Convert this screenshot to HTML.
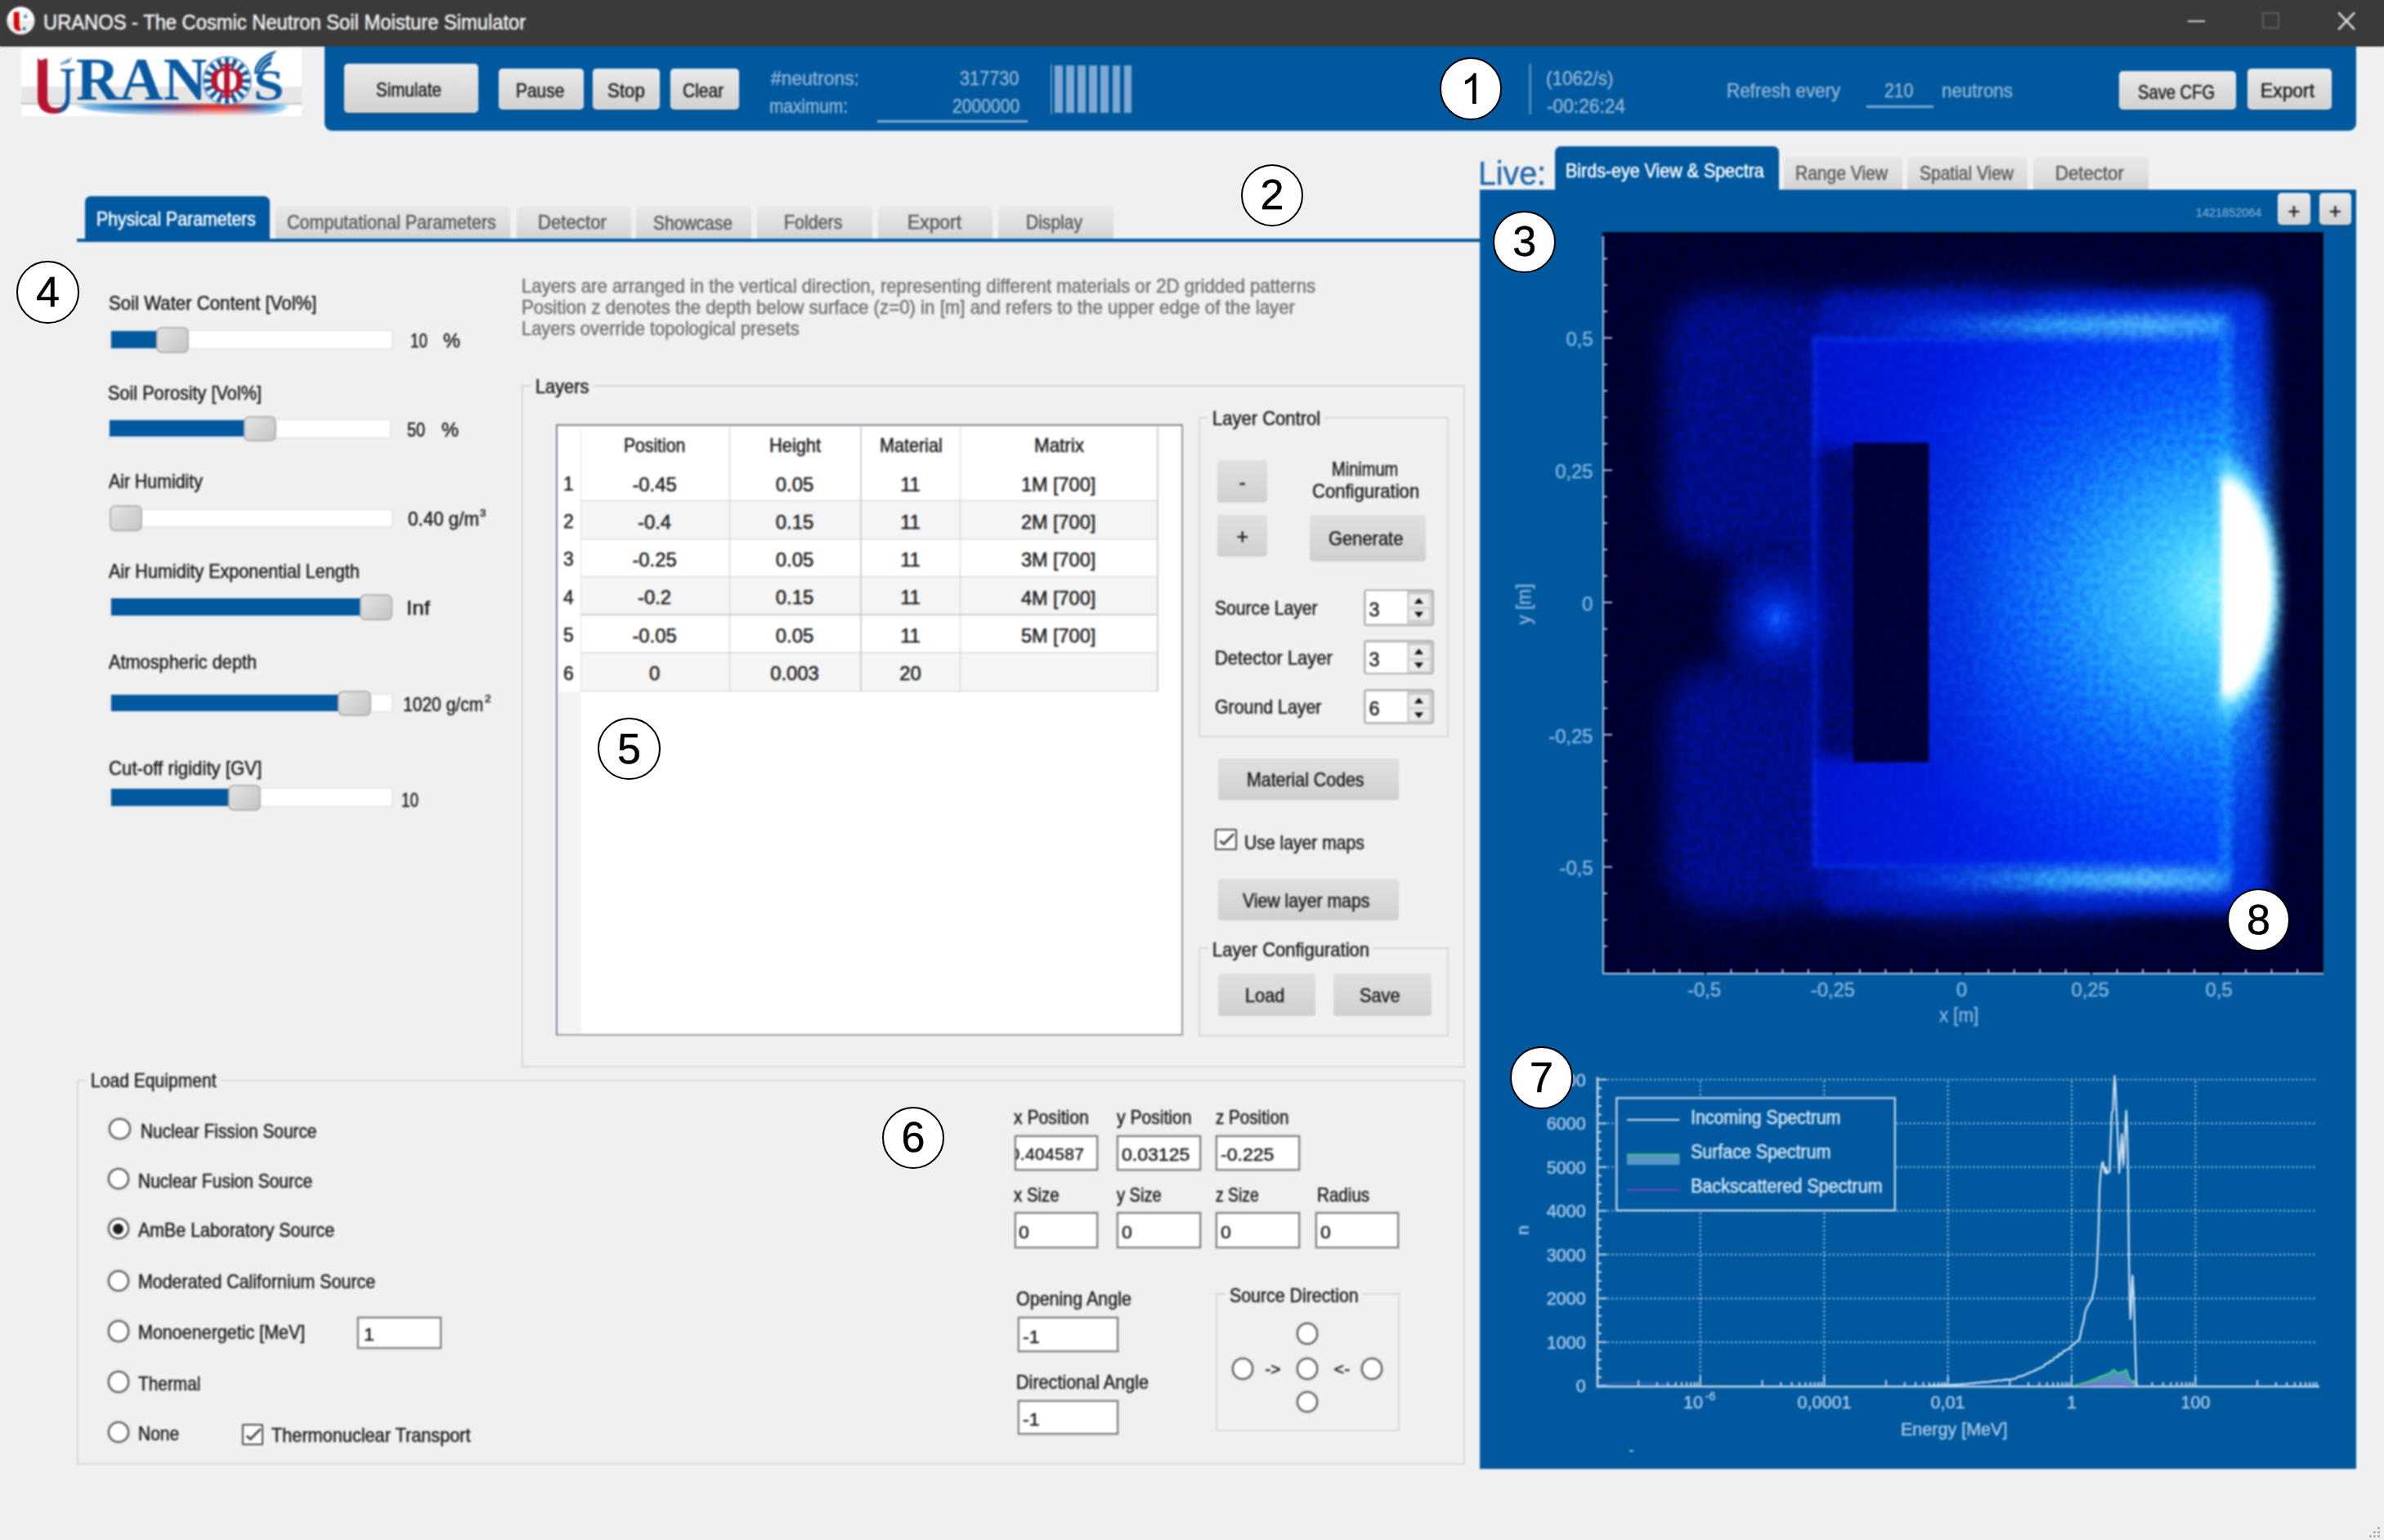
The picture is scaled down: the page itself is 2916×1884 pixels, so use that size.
<!DOCTYPE html>
<html><head><meta charset="utf-8"><title>URANOS - The Cosmic Neutron Soil Moisture Simulator</title>
<style>
html,body{margin:0;padding:0}
html{overflow:hidden;width:2916px;height:1884px}
body{width:2916px;height:1884px;background:#f0f0f0;position:relative;overflow:hidden;font-family:"Liberation Sans",sans-serif;font-size:22px;color:#1c1c1c}
#ui{position:absolute;left:0;top:0;width:2916px;height:1884px;filter:blur(0.9px)}
.a{position:absolute}
.t{position:absolute;white-space:nowrap;-webkit-text-stroke:0.5px currentColor}
svg{position:absolute;overflow:visible}
svg text{font-family:"Liberation Sans",sans-serif}
</style></head><body>
<div class="a" style="left:0;top:0;width:2916px;height:56.4px;background:#3a3a3a"></div>
<div id="ui">
<div class="a " style="left:0.0px;top:0.0px;width:2916.0px;height:56.9px;background:#3a3a3a;"></div>
<svg class="a" style="left:0;top:0" width="60" height="56" viewBox="0 0 60 56">
<defs><linearGradient id="icg" x1="0" x2="0" y1="0" y2="1"><stop offset="0" stop-color="#ffffff"/><stop offset="0.5" stop-color="#fbfbfb"/><stop offset="0.52" stop-color="#e9e9e9"/><stop offset="1" stop-color="#f2f2f2"/></linearGradient></defs>
<circle cx="25.4" cy="25.3" r="17" fill="url(#icg)"/>
<path d="M16.8 14.8 L23.6 14.4 L23.6 31 Q23.6 35 26 36.6 L25 37.6 Q16.8 38.5 16.8 30Z" fill="#d10808"/>
<circle cx="31.2" cy="20.2" r="2.1" fill="#3a7dc0"/><circle cx="32.6" cy="15.8" r="1.1" fill="#8fb8e0"/>
<circle cx="29.7" cy="35.2" r="2.1" fill="#2f74ba"/>
</svg>
<span class="t" style="left:52.5px;top:14.4px;font-size:26.2px;line-height:26.2px;transform-origin:0 50%;transform:scaleX(0.9059);color:#f2f2f2;">URANOS - The Cosmic Neutron Soil Moisture Simulator</span>
<div class="a " style="left:2675.9px;top:24.8px;width:20.8px;height:2.4px;background:#d6d6d6;"></div>
<div class="a " style="left:2766.8px;top:15.0px;width:20.8px;height:20.3px;border:2px solid #5a5a5a;box-sizing:border-box;"></div>
<svg class="a" style="left:2860px;top:14.5px" width="21" height="22"><path d="M0.3 0.3 L20 21.2 M20 0.3 L0.3 21.2" stroke="#e2e2e2" stroke-width="2.5" fill="none"/></svg>
<div class="a " style="left:25.5px;top:58.5px;width:343.0px;height:83.5px;background:#fff;"></div>
<div class="a " style="left:25.5px;top:106.3px;width:343.0px;height:20.0px;background:#e6e6e6;"></div>
<div class="a " style="left:25.5px;top:126.2px;width:343.0px;height:1.4px;background:#c4c4c4;"></div>
<svg class="a" style="left:25px;top:58px" width="344" height="86" viewBox="25 58 344 86">
<defs>
<linearGradient id="ug" x1="0" x2="1" y1="0" y2="0"><stop offset="0" stop-color="#b8142e"/><stop offset="0.45" stop-color="#b8142e"/><stop offset="0.75" stop-color="#0a5aa5"/><stop offset="1" stop-color="#0a5aa5"/></linearGradient>
<linearGradient id="sw" gradientUnits="userSpaceOnUse" x1="87" x2="356" y1="0" y2="0"><stop offset="0" stop-color="#bfe2f8" stop-opacity="0"/><stop offset="0.07" stop-color="#7fc0ee"/><stop offset="0.2" stop-color="#2f86cf"/><stop offset="0.36" stop-color="#1c5ea8"/><stop offset="0.5" stop-color="#7a3c70"/><stop offset="0.6" stop-color="#c83a40"/><stop offset="0.68" stop-color="#e8342c"/><stop offset="0.76" stop-color="#c23c48"/><stop offset="0.84" stop-color="#5a5f9c"/><stop offset="0.91" stop-color="#3c9ad8"/><stop offset="0.97" stop-color="#a8daf6"/><stop offset="1" stop-color="#d8effb" stop-opacity="0"/></linearGradient>
<linearGradient id="swm" x1="0" x2="0" y1="0" y2="1"><stop offset="0" stop-color="#fff"/><stop offset="0.25" stop-color="#fff"/><stop offset="1" stop-color="#000"/></linearGradient>
<mask id="swmask" maskUnits="userSpaceOnUse" x="80" y="126" width="285" height="20"><rect x="80" y="127.4" width="285" height="15.5" fill="url(#swm)"/></mask>
</defs>
<g mask="url(#swmask)"><path d="M87 127 L356 127 Q350 138 325 141.5 Q275 145 215 142.5 Q140 140 105 134 Q93 131 87 127Z" fill="url(#sw)"/></g>
<path d="M46 71 L50 74 L56 71.5 L58 72 L58 120 Q58 132 68 132 Q80.5 132 80.5 118 L80.5 88 L74 86.5 L74 84.5 L91.5 84.5 L91.5 86.5 L85.6 88 L85.6 119 Q85.6 139 66 139 Q46 139 46 119Z" fill="url(#ug)"/>
<path d="M74 80 l2 -4 l1.5 3 l2 -5 l1.5 4 l2 -6 l1 5 l3 -7" stroke="#0a5aa5" stroke-width="1" fill="none"/>
<text x="93" y="121.5" fill="#0a5aa2" textLength="160" lengthAdjust="spacingAndGlyphs" style="font:bold 73px 'Liberation Serif',serif">RAN</text>
<circle cx="277.6" cy="98.9" r="29.3" fill="#fff" stroke="#2a6fb2" stroke-width="1.2"/>
<path d="M289.5 97.7 L305.8 96.0 L305.8 101.8 L289.5 100.1Z M289.1 102.3 L304.7 107.0 L302.5 112.3 L288.2 104.6Z M286.9 106.5 L299.5 116.8 L295.5 120.8 L285.2 108.2Z M283.3 109.5 L291.0 123.8 L285.7 126.0 L281.0 110.4Z M278.8 110.8 L280.5 127.1 L274.7 127.1 L276.4 110.8Z M274.2 110.4 L269.5 126.0 L264.2 123.8 L271.9 109.5Z M270.0 108.2 L259.7 120.8 L255.7 116.8 L268.3 106.5Z M267.0 104.6 L252.7 112.3 L250.5 107.0 L266.1 102.3Z M265.7 100.1 L249.4 101.8 L249.4 96.0 L265.7 97.7Z M266.1 95.5 L250.5 90.8 L252.7 85.5 L267.0 93.2Z M268.3 91.3 L255.7 81.0 L259.7 77.0 L270.0 89.6Z M271.9 88.3 L264.2 74.0 L269.5 71.8 L274.2 87.4Z M276.4 87.0 L274.7 70.7 L280.5 70.7 L278.8 87.0Z M281.0 87.4 L285.7 71.8 L291.0 74.0 L283.3 88.3Z M285.2 89.6 L295.5 77.0 L299.5 81.0 L286.9 91.3Z M288.2 93.2 L302.5 85.5 L304.7 90.8 L289.1 95.5Z" fill="#0a5aa2"/>
<ellipse cx="277.6" cy="99.5" rx="17" ry="13" fill="#fff"/>
<g transform="translate(277.6 0) scale(0.83 1)"><text x="0" y="119.8" text-anchor="middle" fill="#b9142e" style="font:bold 62.5px 'Liberation Serif',serif">&#934;</text></g>
<g transform="translate(310 0) scale(1.3 1)"><text x="0" y="122.3" fill="#0a5aa2" style="font:bold 52px 'Liberation Serif',serif">S</text></g>
<path d="M310.8 90.5 Q311.5 69 339 61.5 Q330.5 69.5 331.5 79.5 Q324 81.5 321 90Z" fill="#0a5aa2"/>
<path d="M314.5 87 Q317 72.5 335 66.5 M318 88 Q321 77.5 333.5 72.5" stroke="#fff" stroke-width="1.1" fill="none"/>
</svg>
<div class="a " style="left:397.0px;top:56.5px;width:2485.3px;height:103.5px;background:#00599f;border-radius:0 0 9px 9px;"></div>
<div class="a " style="left:421.0px;top:78.0px;width:164.0px;height:60.0px;background:linear-gradient(#ebebeb,#dedede 45%,#d2d2d2);border-radius:5px;box-shadow:inset 0 0 0 1px rgba(255,255,255,.55),0 1px 2px rgba(0,0,0,.35);"></div>
<span class="t" style="left:460.4px;top:98.9px;font-size:23.4px;line-height:23.4px;transform-origin:0 50%;transform:scaleX(0.8776);color:#1c1c1c;">Simulate</span>
<div class="a " style="left:610.0px;top:84.0px;width:104.0px;height:50.0px;background:linear-gradient(#ebebeb,#dedede 45%,#d2d2d2);border-radius:5px;box-shadow:inset 0 0 0 1px rgba(255,255,255,.55),0 1px 2px rgba(0,0,0,.35);"></div>
<span class="t" style="left:630.9px;top:99.7px;font-size:23.4px;line-height:23.4px;transform-origin:0 50%;transform:scaleX(0.8952);color:#1c1c1c;">Pause</span>
<div class="a " style="left:725.0px;top:84.0px;width:82.0px;height:50.0px;background:linear-gradient(#ebebeb,#dedede 45%,#d2d2d2);border-radius:5px;box-shadow:inset 0 0 0 1px rgba(255,255,255,.55),0 1px 2px rgba(0,0,0,.35);"></div>
<span class="t" style="left:742.6px;top:99.7px;font-size:23.4px;line-height:23.4px;transform-origin:0 50%;transform:scaleX(0.9535);color:#1c1c1c;">Stop</span>
<div class="a " style="left:820.0px;top:84.0px;width:83.5px;height:50.0px;background:linear-gradient(#ebebeb,#dedede 45%,#d2d2d2);border-radius:5px;box-shadow:inset 0 0 0 1px rgba(255,255,255,.55),0 1px 2px rgba(0,0,0,.35);"></div>
<span class="t" style="left:835.4px;top:99.8px;font-size:23.4px;line-height:23.4px;transform-origin:0 50%;transform:scaleX(0.8995);color:#1c1c1c;">Clear</span>
<span class="t" style="left:943.0px;top:84.8px;font-size:23.4px;line-height:23.4px;transform-origin:0 50%;transform:scaleX(0.9766);color:#8fb3d6;">#neutrons:</span>
<span class="t" style="left:941.0px;top:119.4px;font-size:23.4px;line-height:23.4px;transform-origin:0 50%;transform:scaleX(0.8897);color:#8fb3d6;">maximum:</span>
<span class="t" style="left:1174.0px;top:84.8px;font-size:23.4px;line-height:23.4px;transform-origin:0 50%;transform:scaleX(0.9259);color:#8fb3d6;">317730</span>
<span class="t" style="left:1165.0px;top:119.4px;font-size:23.4px;line-height:23.4px;transform-origin:0 50%;transform:scaleX(0.9034);color:#8fb3d6;">2000000</span>
<div class="a " style="left:1073.0px;top:146.7px;width:183.5px;height:3.0px;background:#7fa9d2;"></div>
<div class="a " style="left:1285.0px;top:78.5px;width:2.0px;height:61.5px;background:#5f95c6;"></div>
<div class="a " style="left:1290.0px;top:80.0px;width:9.6px;height:58.0px;background:#7ea8d1;"></div>
<div class="a " style="left:1304.1px;top:80.0px;width:9.6px;height:58.0px;background:#7ea8d1;"></div>
<div class="a " style="left:1318.2px;top:80.0px;width:9.6px;height:58.0px;background:#7ea8d1;"></div>
<div class="a " style="left:1332.3px;top:80.0px;width:9.6px;height:58.0px;background:#7ea8d1;"></div>
<div class="a " style="left:1346.4px;top:80.0px;width:9.6px;height:58.0px;background:#7ea8d1;"></div>
<div class="a " style="left:1360.5px;top:80.0px;width:9.6px;height:58.0px;background:#7ea8d1;"></div>
<div class="a " style="left:1374.6px;top:80.0px;width:9.6px;height:58.0px;background:#7ea8d1;"></div>
<div class="a " style="left:1870.0px;top:78.0px;width:3.0px;height:62.0px;background:#4f89bf;"></div>
<span class="t" style="left:1890.5px;top:84.8px;font-size:23.4px;line-height:23.4px;transform-origin:0 50%;transform:scaleX(0.9610);color:#8fb3d6;">(1062/s)</span>
<span class="t" style="left:1892.0px;top:118.8px;font-size:23.4px;line-height:23.4px;transform-origin:0 50%;transform:scaleX(0.9709);color:#8fb3d6;">-00:26:24</span>
<span class="t" style="left:2111.8px;top:99.7px;font-size:23.4px;line-height:23.4px;transform-origin:0 50%;transform:scaleX(0.9557);color:#8fb3d6;">Refresh every</span>
<span class="t" style="left:2305.0px;top:99.7px;font-size:23.4px;line-height:23.4px;transform-origin:0 50%;transform:scaleX(0.9067);color:#8fb3d6;">210</span>
<div class="a " style="left:2282.5px;top:129.0px;width:82.5px;height:3.0px;background:#7fa9d2;"></div>
<span class="t" style="left:2374.6px;top:99.7px;font-size:23.4px;line-height:23.4px;transform-origin:0 50%;transform:scaleX(0.9543);color:#8fb3d6;">neutrons</span>
<div class="a " style="left:2592.0px;top:86.5px;width:142.5px;height:47.1px;background:linear-gradient(#ebebeb,#dedede 45%,#d2d2d2);border-radius:5px;box-shadow:inset 0 0 0 1px rgba(255,255,255,.55),0 1px 2px rgba(0,0,0,.35);"></div>
<span class="t" style="left:2614.8px;top:101.5px;font-size:23.4px;line-height:23.4px;transform-origin:0 50%;transform:scaleX(0.8624);color:#1c1c1c;">Save CFG</span>
<div class="a " style="left:2749.0px;top:84.0px;width:102.6px;height:49.6px;background:linear-gradient(#ebebeb,#dedede 45%,#d2d2d2);border-radius:5px;box-shadow:inset 0 0 0 1px rgba(255,255,255,.55),0 1px 2px rgba(0,0,0,.35);"></div>
<span class="t" style="left:2765.0px;top:99.5px;font-size:23.4px;line-height:23.4px;transform-origin:0 50%;transform:scaleX(0.9759);color:#1c1c1c;">Export</span>
<div class="a " style="left:94.0px;top:292.0px;width:1720.0px;height:4.0px;background:#00599f;"></div>
<div class="a " style="left:104.0px;top:240.0px;width:226.0px;height:53.0px;background:#00599f;border-radius:7px 7px 0 0;"></div>
<span class="t" style="left:118.0px;top:257.1px;font-size:23.4px;line-height:23.4px;transform-origin:0 50%;transform:scaleX(0.9087);color:#fff;">Physical Parameters</span>
<div class="a " style="left:337.0px;top:250.5px;width:287.0px;height:41.5px;background:linear-gradient(#e9e9e9,#dedede 60%,#d3d3d3);border-radius:6px 6px 0 0;box-shadow:inset 0 1px 0 #f4f4f4;"></div>
<span class="t" style="left:351.0px;top:261.4px;font-size:23.4px;line-height:23.4px;transform-origin:0 50%;transform:scaleX(0.9197);color:#5a5a5a;">Computational Parameters</span>
<div class="a " style="left:631.5px;top:250.5px;width:140.5px;height:41.5px;background:linear-gradient(#e9e9e9,#dedede 60%,#d3d3d3);border-radius:6px 6px 0 0;box-shadow:inset 0 1px 0 #f4f4f4;"></div>
<span class="t" style="left:657.7px;top:261.4px;font-size:23.4px;line-height:23.4px;transform-origin:0 50%;transform:scaleX(0.9487);color:#5a5a5a;">Detector</span>
<div class="a " style="left:778.0px;top:250.5px;width:141.0px;height:41.5px;background:linear-gradient(#e9e9e9,#dedede 60%,#d3d3d3);border-radius:6px 6px 0 0;box-shadow:inset 0 1px 0 #f4f4f4;"></div>
<span class="t" style="left:799.0px;top:261.6px;font-size:23.4px;line-height:23.4px;transform-origin:0 50%;transform:scaleX(0.8984);color:#5a5a5a;">Showcase</span>
<div class="a " style="left:926.0px;top:250.5px;width:140.5px;height:41.5px;background:linear-gradient(#e9e9e9,#dedede 60%,#d3d3d3);border-radius:6px 6px 0 0;box-shadow:inset 0 1px 0 #f4f4f4;"></div>
<span class="t" style="left:958.5px;top:261.4px;font-size:23.4px;line-height:23.4px;transform-origin:0 50%;transform:scaleX(0.9163);color:#5a5a5a;">Folders</span>
<div class="a " style="left:1073.5px;top:250.5px;width:140.5px;height:41.5px;background:linear-gradient(#e9e9e9,#dedede 60%,#d3d3d3);border-radius:6px 6px 0 0;box-shadow:inset 0 1px 0 #f4f4f4;"></div>
<span class="t" style="left:1110.0px;top:261.4px;font-size:23.4px;line-height:23.4px;transform-origin:0 50%;transform:scaleX(0.9759);color:#5a5a5a;">Export</span>
<div class="a " style="left:1220.5px;top:250.5px;width:141.0px;height:41.5px;background:linear-gradient(#e9e9e9,#dedede 60%,#d3d3d3);border-radius:6px 6px 0 0;box-shadow:inset 0 1px 0 #f4f4f4;"></div>
<span class="t" style="left:1255.0px;top:261.4px;font-size:23.4px;line-height:23.4px;transform-origin:0 50%;transform:scaleX(0.8993);color:#5a5a5a;">Display</span>
<span class="t" style="left:133.4px;top:360.2px;font-size:23.4px;line-height:23.4px;transform-origin:0 50%;transform:scaleX(0.9487);color:#1c1c1c;">Soil Water Content [Vol%]</span>
<div class="a " style="left:135.6px;top:405.3px;width:343.6px;height:20.5px;background:#fff;box-shadow:0 0 0 1.5px #e4e4e4;"></div>
<div class="a " style="left:136.0px;top:404.9px;width:59.4px;height:20.9px;background:#00599f;"></div>
<div class="a " style="left:191.0px;top:400.0px;width:40.0px;height:31.5px;background:linear-gradient(135deg,#e4e4e4,#d4d4d4 50%,#c6c6c6);border:2px solid #b3b3b3;border-radius:7px;box-sizing:border-box;"></div>
<span class="t" style="left:501.5px;top:405.6px;font-size:23.4px;line-height:23.4px;transform-origin:0 50%;transform:scaleX(0.7991);color:#1c1c1c;">10</span>
<span class="t" style="left:542.0px;top:405.6px;font-size:23.4px;line-height:23.4px;transform-origin:0 50%;transform:scaleX(1.0093);color:#1c1c1c;">%</span>
<span class="t" style="left:131.5px;top:469.7px;font-size:23.4px;line-height:23.4px;transform-origin:0 50%;transform:scaleX(0.9266);color:#1c1c1c;">Soil Porosity [Vol%]</span>
<div class="a " style="left:133.7px;top:514.0px;width:343.6px;height:20.5px;background:#fff;box-shadow:0 0 0 1.5px #e4e4e4;"></div>
<div class="a " style="left:134.1px;top:513.6px;width:168.3px;height:20.9px;background:#00599f;"></div>
<div class="a " style="left:298.0px;top:508.6px;width:39.7px;height:31.7px;background:linear-gradient(135deg,#e4e4e4,#d4d4d4 50%,#c6c6c6);border:2px solid #b3b3b3;border-radius:7px;box-sizing:border-box;"></div>
<span class="t" style="left:498.0px;top:514.6px;font-size:23.4px;line-height:23.4px;transform-origin:0 50%;transform:scaleX(0.8452);color:#1c1c1c;">50</span>
<span class="t" style="left:540.0px;top:514.6px;font-size:23.4px;line-height:23.4px;transform-origin:0 50%;transform:scaleX(1.0093);color:#1c1c1c;">%</span>
<span class="t" style="left:133.4px;top:578.4px;font-size:23.4px;line-height:23.4px;transform-origin:0 50%;transform:scaleX(0.9110);color:#1c1c1c;">Air Humidity</span>
<div class="a " style="left:135.6px;top:623.6px;width:343.6px;height:20.5px;background:#fff;box-shadow:0 0 0 1.5px #e4e4e4;"></div>
<div class="a " style="left:134.0px;top:618.0px;width:40.0px;height:32.0px;background:linear-gradient(135deg,#e4e4e4,#d4d4d4 50%,#c6c6c6);border:2px solid #b3b3b3;border-radius:7px;box-sizing:border-box;"></div>
<span class="t" style="left:499.3px;top:623.9px;font-size:23.4px;line-height:23.4px;transform-origin:0 50%;transform:scaleX(0.9577);color:#1c1c1c;">0.40 g/m</span>
<span class="t" style="left:587.2px;top:622.3px;font-size:12.5px;line-height:12.5px;transform-origin:0 50%;transform:scaleX(1.0644);color:#1c1c1c;">3</span>
<span class="t" style="left:133.4px;top:688.0px;font-size:23.4px;line-height:23.4px;transform-origin:0 50%;transform:scaleX(0.9216);color:#1c1c1c;">Air Humidity Exponential Length</span>
<div class="a " style="left:135.6px;top:732.6px;width:343.6px;height:20.5px;background:#fff;box-shadow:0 0 0 1.5px #e4e4e4;"></div>
<div class="a " style="left:136.0px;top:732.2px;width:307.9px;height:20.9px;background:#00599f;"></div>
<div class="a " style="left:439.5px;top:727.0px;width:40.2px;height:31.8px;background:linear-gradient(135deg,#e4e4e4,#d4d4d4 50%,#c6c6c6);border:2px solid #b3b3b3;border-radius:7px;box-sizing:border-box;"></div>
<span class="t" style="left:497.0px;top:732.7px;font-size:23.4px;line-height:23.4px;transform-origin:0 50%;transform:scaleX(1.1146);color:#1c1c1c;">Inf</span>
<span class="t" style="left:133.4px;top:799.4px;font-size:23.4px;line-height:23.4px;transform-origin:0 50%;transform:scaleX(0.9287);color:#1c1c1c;">Atmospheric depth</span>
<div class="a " style="left:135.6px;top:849.9px;width:343.6px;height:20.5px;background:#fff;box-shadow:0 0 0 1.5px #e4e4e4;"></div>
<div class="a " style="left:136.0px;top:849.5px;width:281.8px;height:20.9px;background:#00599f;"></div>
<div class="a " style="left:413.4px;top:844.7px;width:40.3px;height:31.3px;background:linear-gradient(135deg,#e4e4e4,#d4d4d4 50%,#c6c6c6);border:2px solid #b3b3b3;border-radius:7px;box-sizing:border-box;"></div>
<span class="t" style="left:493.4px;top:850.8px;font-size:23.4px;line-height:23.4px;transform-origin:0 50%;transform:scaleX(0.8996);color:#1c1c1c;">1020 g/cm</span>
<span class="t" style="left:592.5px;top:849.2px;font-size:12.5px;line-height:12.5px;transform-origin:0 50%;transform:scaleX(1.0788);color:#1c1c1c;">2</span>
<span class="t" style="left:133.4px;top:928.8px;font-size:23.4px;line-height:23.4px;transform-origin:0 50%;transform:scaleX(0.9501);color:#1c1c1c;">Cut-off rigidity [GV]</span>
<div class="a " style="left:135.6px;top:965.3px;width:343.6px;height:20.8px;background:#fff;box-shadow:0 0 0 1.5px #e4e4e4;"></div>
<div class="a " style="left:136.0px;top:964.9px;width:147.6px;height:21.2px;background:#00599f;"></div>
<div class="a " style="left:279.2px;top:960.0px;width:40.3px;height:31.5px;background:linear-gradient(135deg,#e4e4e4,#d4d4d4 50%,#c6c6c6);border:2px solid #b3b3b3;border-radius:7px;box-sizing:border-box;"></div>
<span class="t" style="left:491.3px;top:967.8px;font-size:23.4px;line-height:23.4px;transform-origin:0 50%;transform:scaleX(0.8030);color:#1c1c1c;">10</span>
<span class="t" style="left:637.6px;top:338.7px;font-size:23.4px;line-height:23.4px;transform-origin:0 50%;transform:scaleX(0.9482);color:#747474;">Layers are arranged in the vertical direction, representing different materials or 2D gridded patterns</span>
<span class="t" style="left:637.6px;top:364.7px;font-size:23.4px;line-height:23.4px;transform-origin:0 50%;transform:scaleX(0.9516);color:#747474;">Position z denotes the depth below surface (z=0) in [m] and refers to the upper edge of the layer</span>
<span class="t" style="left:637.6px;top:391.1px;font-size:23.4px;line-height:23.4px;transform-origin:0 50%;transform:scaleX(0.9363);color:#747474;">Layers override topological presets</span>
<div class="a " style="left:638.3px;top:470.7px;width:1154.0px;height:835.8px;border:2px solid #d9d9d9;box-sizing:border-box;"></div>
<div class="a " style="left:650.4px;top:468.7px;width:75.3px;height:7.0px;background:#f0f0f0;"></div>
<span class="t" style="left:655.4px;top:461.9px;font-size:23.4px;line-height:23.4px;transform-origin:0 50%;transform:scaleX(0.9297);color:#1c1c1c;">Layers</span>
<div class="a " style="left:680.4px;top:519.2px;width:767.1px;height:747.8px;background:#fff;border:2.6px solid #7d828b;border-right-color:#979ba3;border-bottom-color:#979ba3;box-sizing:border-box;"></div>
<div class="a " style="left:682.9px;top:845.6px;width:27.8px;height:418.9px;background:#f3f3f3;"></div>
<div class="a " style="left:710.7px;top:612.2px;width:705.5px;height:1.7px;background:#cdcdcd;"></div>
<div class="a " style="left:710.7px;top:613.2px;width:705.5px;height:46.4px;background:#f5f5f5;"></div>
<div class="a " style="left:710.7px;top:658.6px;width:705.5px;height:1.7px;background:#cdcdcd;"></div>
<div class="a " style="left:710.7px;top:705.0px;width:705.5px;height:1.7px;background:#cdcdcd;"></div>
<div class="a " style="left:710.7px;top:706.0px;width:705.5px;height:46.4px;background:#f5f5f5;"></div>
<div class="a " style="left:710.7px;top:751.4px;width:705.5px;height:1.7px;background:#cdcdcd;"></div>
<div class="a " style="left:710.7px;top:797.8px;width:705.5px;height:1.7px;background:#cdcdcd;"></div>
<div class="a " style="left:710.7px;top:798.8px;width:705.5px;height:46.8px;background:#f5f5f5;"></div>
<div class="a " style="left:710.7px;top:844.6px;width:705.5px;height:1.7px;background:#cdcdcd;"></div>
<div class="a " style="left:709.9px;top:521.7px;width:1.6px;height:323.9px;background:#e2e2e2;"></div>
<div class="a " style="left:891.7px;top:521.7px;width:1.6px;height:323.9px;background:#d0d0d0;"></div>
<div class="a " style="left:1052.0px;top:521.7px;width:1.6px;height:323.9px;background:#d0d0d0;"></div>
<div class="a " style="left:1173.6px;top:521.7px;width:1.6px;height:323.9px;background:#d0d0d0;"></div>
<div class="a " style="left:1415.4px;top:521.7px;width:1.6px;height:323.9px;background:#d0d0d0;"></div>
<span class="t" style="left:762.8px;top:534.1px;font-size:23.4px;line-height:23.4px;transform-origin:0 50%;transform:scaleX(0.9033);color:#1c1c1c;">Position</span>
<span class="t" style="left:940.8px;top:534.1px;font-size:23.4px;line-height:23.4px;transform-origin:0 50%;transform:scaleX(0.9328);color:#1c1c1c;">Height</span>
<span class="t" style="left:1075.6px;top:534.1px;font-size:23.4px;line-height:23.4px;transform-origin:0 50%;transform:scaleX(0.9216);color:#1c1c1c;">Material</span>
<span class="t" style="left:1265.4px;top:534.1px;font-size:23.4px;line-height:23.4px;transform-origin:0 50%;transform:scaleX(0.9560);color:#1c1c1c;">Matrix</span>
<span class="t" style="left:695.3px;top:581.1px;font-size:23px;line-height:23px;color:#1c1c1c;transform:translateX(-50%);">1</span>
<span class="t" style="left:800.5px;top:580.7px;font-size:23.8px;line-height:23.8px;color:#1c1c1c;transform:translateX(-50%);">-0.45</span>
<span class="t" style="left:972.0px;top:580.7px;font-size:23.8px;line-height:23.8px;color:#1c1c1c;transform:translateX(-50%);">0.05</span>
<span class="t" style="left:1113.5px;top:580.7px;font-size:23.8px;line-height:23.8px;color:#1c1c1c;transform:translateX(-50%);">11</span>
<span class="t" style="left:1249.3px;top:581.1px;font-size:24px;line-height:24px;transform-origin:0 50%;transform:scaleX(0.9765);color:#1c1c1c;">1M [700]</span>
<span class="t" style="left:695.3px;top:626.9px;font-size:23px;line-height:23px;color:#1c1c1c;transform:translateX(-50%);">2</span>
<span class="t" style="left:800.5px;top:626.5px;font-size:23.8px;line-height:23.8px;color:#1c1c1c;transform:translateX(-50%);">-0.4</span>
<span class="t" style="left:972.0px;top:626.5px;font-size:23.8px;line-height:23.8px;color:#1c1c1c;transform:translateX(-50%);">0.15</span>
<span class="t" style="left:1113.5px;top:626.5px;font-size:23.8px;line-height:23.8px;color:#1c1c1c;transform:translateX(-50%);">11</span>
<span class="t" style="left:1249.3px;top:626.9px;font-size:24px;line-height:24px;transform-origin:0 50%;transform:scaleX(0.9765);color:#1c1c1c;">2M [700]</span>
<span class="t" style="left:695.3px;top:673.3px;font-size:23px;line-height:23px;color:#1c1c1c;transform:translateX(-50%);">3</span>
<span class="t" style="left:800.5px;top:672.9px;font-size:23.8px;line-height:23.8px;color:#1c1c1c;transform:translateX(-50%);">-0.25</span>
<span class="t" style="left:972.0px;top:672.9px;font-size:23.8px;line-height:23.8px;color:#1c1c1c;transform:translateX(-50%);">0.05</span>
<span class="t" style="left:1113.5px;top:672.9px;font-size:23.8px;line-height:23.8px;color:#1c1c1c;transform:translateX(-50%);">11</span>
<span class="t" style="left:1249.3px;top:673.3px;font-size:24px;line-height:24px;transform-origin:0 50%;transform:scaleX(0.9765);color:#1c1c1c;">3M [700]</span>
<span class="t" style="left:695.3px;top:719.7px;font-size:23px;line-height:23px;color:#1c1c1c;transform:translateX(-50%);">4</span>
<span class="t" style="left:800.5px;top:719.3px;font-size:23.8px;line-height:23.8px;color:#1c1c1c;transform:translateX(-50%);">-0.2</span>
<span class="t" style="left:972.0px;top:719.3px;font-size:23.8px;line-height:23.8px;color:#1c1c1c;transform:translateX(-50%);">0.15</span>
<span class="t" style="left:1113.5px;top:719.3px;font-size:23.8px;line-height:23.8px;color:#1c1c1c;transform:translateX(-50%);">11</span>
<span class="t" style="left:1249.3px;top:719.7px;font-size:24px;line-height:24px;transform-origin:0 50%;transform:scaleX(0.9765);color:#1c1c1c;">4M [700]</span>
<span class="t" style="left:695.3px;top:766.1px;font-size:23px;line-height:23px;color:#1c1c1c;transform:translateX(-50%);">5</span>
<span class="t" style="left:800.5px;top:765.7px;font-size:23.8px;line-height:23.8px;color:#1c1c1c;transform:translateX(-50%);">-0.05</span>
<span class="t" style="left:972.0px;top:765.7px;font-size:23.8px;line-height:23.8px;color:#1c1c1c;transform:translateX(-50%);">0.05</span>
<span class="t" style="left:1113.5px;top:765.7px;font-size:23.8px;line-height:23.8px;color:#1c1c1c;transform:translateX(-50%);">11</span>
<span class="t" style="left:1249.3px;top:766.1px;font-size:24px;line-height:24px;transform-origin:0 50%;transform:scaleX(0.9765);color:#1c1c1c;">5M [700]</span>
<span class="t" style="left:695.3px;top:812.7px;font-size:23px;line-height:23px;color:#1c1c1c;transform:translateX(-50%);">6</span>
<span class="t" style="left:800.5px;top:812.3px;font-size:23.8px;line-height:23.8px;color:#1c1c1c;transform:translateX(-50%);">0</span>
<span class="t" style="left:972.0px;top:812.3px;font-size:23.8px;line-height:23.8px;color:#1c1c1c;transform:translateX(-50%);">0.003</span>
<span class="t" style="left:1113.5px;top:812.3px;font-size:23.8px;line-height:23.8px;color:#1c1c1c;transform:translateX(-50%);">20</span>
<div class="a " style="left:1466.3px;top:510.0px;width:305.7px;height:392.3px;border:2px solid #d9d9d9;box-sizing:border-box;"></div>
<div class="a " style="left:1477.8px;top:508.0px;width:142.2px;height:7.0px;background:#f0f0f0;"></div>
<span class="t" style="left:1482.8px;top:501.4px;font-size:23.4px;line-height:23.4px;transform-origin:0 50%;transform:scaleX(0.9411);color:#1c1c1c;">Layer Control</span>
<div class="a " style="left:1489.3px;top:562.0px;width:60.7px;height:52.5px;background:linear-gradient(#e0e0e0,#d9d9d9 50%,#cfcfcf);border-radius:4px;box-shadow:inset 0 1px 0 rgba(255,255,255,.5);"></div>
<span class="t" style="left:1515.8px;top:578.7px;font-size:23.4px;line-height:23.4px;transform-origin:0 50%;transform:scaleX(1.0000);color:#1c1c1c;">-</span>
<div class="a " style="left:1489.3px;top:628.5px;width:60.7px;height:52.5px;background:linear-gradient(#e0e0e0,#d9d9d9 50%,#cfcfcf);border-radius:4px;box-shadow:inset 0 1px 0 rgba(255,255,255,.5);"></div>
<span class="t" style="left:1512.4px;top:644.4px;font-size:25px;line-height:25px;transform-origin:0 50%;transform:scaleX(1.0000);color:#1c1c1c;">+</span>
<span class="t" style="left:1628.9px;top:563.2px;font-size:23.4px;line-height:23.4px;transform-origin:0 50%;transform:scaleX(0.8567);color:#1c1c1c;">Minimum</span>
<span class="t" style="left:1605.0px;top:589.9px;font-size:23.4px;line-height:23.4px;transform-origin:0 50%;transform:scaleX(0.9426);color:#1c1c1c;">Configuration</span>
<div class="a " style="left:1602.0px;top:628.5px;width:141.8px;height:58.5px;background:linear-gradient(#e0e0e0,#d9d9d9 50%,#cfcfcf);border-radius:4px;box-shadow:inset 0 1px 0 rgba(255,255,255,.5);"></div>
<span class="t" style="left:1625.0px;top:648.2px;font-size:23.4px;line-height:23.4px;transform-origin:0 50%;transform:scaleX(0.9368);color:#1c1c1c;">Generate</span>
<span class="t" style="left:1486.0px;top:732.9px;font-size:23.4px;line-height:23.4px;transform-origin:0 50%;transform:scaleX(0.9031);color:#1c1c1c;">Source Layer</span>
<div class="a " style="left:1668.0px;top:720.5px;width:86.0px;height:45.1px;background:linear-gradient(#c6c6c6,#d6d6d6 30%,#d0d0d0);border:2.8px solid #b1b1b1;border-radius:4px;box-sizing:border-box;"></div>
<div class="a " style="left:1670.8px;top:723.3px;width:50.5px;height:39.5px;background:#fff;"></div>
<span class="t" style="left:1674.4px;top:734.5px;font-size:23.4px;line-height:23.4px;transform-origin:0 50%;transform:scaleX(1.0000);color:#1c1c1c;">3</span>
<div class="a " style="left:1723.5px;top:727.1px;width:24.5px;height:15.2px;background:#ececec;"></div>
<div class="a " style="left:1723.5px;top:745.7px;width:24.5px;height:12.8px;background:#ececec;"></div>
<svg class="a" style="left:1730.2px;top:730.5px" width="11" height="8"><path d="M0 7.5 L5.5 0.5 L11 7.5Z" fill="#111"/></svg>
<svg class="a" style="left:1730.2px;top:748.1px" width="11" height="8"><path d="M0 0.5 L5.5 7.5 L11 0.5Z" fill="#111"/></svg>
<span class="t" style="left:1485.7px;top:793.8px;font-size:23.4px;line-height:23.4px;transform-origin:0 50%;transform:scaleX(0.9370);color:#1c1c1c;">Detector Layer</span>
<div class="a " style="left:1668.0px;top:782.8px;width:86.0px;height:42.7px;background:linear-gradient(#c6c6c6,#d6d6d6 30%,#d0d0d0);border:2.8px solid #b1b1b1;border-radius:4px;box-sizing:border-box;"></div>
<div class="a " style="left:1670.8px;top:785.6px;width:50.5px;height:37.1px;background:#fff;"></div>
<span class="t" style="left:1674.4px;top:795.6px;font-size:23.4px;line-height:23.4px;transform-origin:0 50%;transform:scaleX(1.0000);color:#1c1c1c;">3</span>
<div class="a " style="left:1723.5px;top:789.4px;width:24.5px;height:15.2px;background:#ececec;"></div>
<div class="a " style="left:1723.5px;top:808.0px;width:24.5px;height:12.8px;background:#ececec;"></div>
<svg class="a" style="left:1730.2px;top:792.8px" width="11" height="8"><path d="M0 7.5 L5.5 0.5 L11 7.5Z" fill="#111"/></svg>
<svg class="a" style="left:1730.2px;top:810.4px" width="11" height="8"><path d="M0 0.5 L5.5 7.5 L11 0.5Z" fill="#111"/></svg>
<span class="t" style="left:1486.0px;top:854.3px;font-size:23.4px;line-height:23.4px;transform-origin:0 50%;transform:scaleX(0.9120);color:#1c1c1c;">Ground Layer</span>
<div class="a " style="left:1668.0px;top:843.0px;width:86.0px;height:42.5px;background:linear-gradient(#c6c6c6,#d6d6d6 30%,#d0d0d0);border:2.8px solid #b1b1b1;border-radius:4px;box-sizing:border-box;"></div>
<div class="a " style="left:1670.8px;top:845.8px;width:50.5px;height:36.9px;background:#fff;"></div>
<span class="t" style="left:1674.4px;top:855.7px;font-size:23.4px;line-height:23.4px;transform-origin:0 50%;transform:scaleX(1.0000);color:#1c1c1c;">6</span>
<div class="a " style="left:1723.5px;top:849.6px;width:24.5px;height:15.2px;background:#ececec;"></div>
<div class="a " style="left:1723.5px;top:868.2px;width:24.5px;height:12.8px;background:#ececec;"></div>
<svg class="a" style="left:1730.2px;top:853.0px" width="11" height="8"><path d="M0 7.5 L5.5 0.5 L11 7.5Z" fill="#111"/></svg>
<svg class="a" style="left:1730.2px;top:870.6px" width="11" height="8"><path d="M0 0.5 L5.5 7.5 L11 0.5Z" fill="#111"/></svg>
<div class="a " style="left:1489.6px;top:926.6px;width:221.6px;height:52.4px;background:linear-gradient(#e0e0e0,#d9d9d9 50%,#cfcfcf);border-radius:4px;box-shadow:inset 0 1px 0 rgba(255,255,255,.5);"></div>
<span class="t" style="left:1525.4px;top:943.2px;font-size:23.4px;line-height:23.4px;transform-origin:0 50%;transform:scaleX(0.9125);color:#1c1c1c;">Material Codes</span>
<div class="a " style="left:1486.0px;top:1014.0px;width:27.0px;height:26.0px;background:#fff;border:2.6px solid #4e4e4e;border-radius:1.5px;box-sizing:border-box;"></div>
<svg class="a" style="left:1486.0px;top:1014.0px" width="27.0" height="26.0" viewBox="0 0 26 26"><path d="M5.6 14.6 L10.4 18.6 L22.6 6.2" fill="none" stroke="#484848" stroke-width="2.8"/></svg>
<span class="t" style="left:1522.0px;top:1019.7px;font-size:23.4px;line-height:23.4px;transform-origin:0 50%;transform:scaleX(0.9043);color:#1c1c1c;">Use layer maps</span>
<div class="a " style="left:1489.6px;top:1073.8px;width:221.6px;height:52.6px;background:linear-gradient(#e0e0e0,#d9d9d9 50%,#cfcfcf);border-radius:4px;box-shadow:inset 0 1px 0 rgba(255,255,255,.5);"></div>
<span class="t" style="left:1520.0px;top:1090.5px;font-size:23.4px;line-height:23.4px;transform-origin:0 50%;transform:scaleX(0.9075);color:#1c1c1c;">View layer maps</span>
<div class="a " style="left:1466.3px;top:1159.4px;width:305.7px;height:109.0px;border:2px solid #d9d9d9;box-sizing:border-box;"></div>
<div class="a " style="left:1478.3px;top:1157.4px;width:202.1px;height:7.0px;background:#f0f0f0;"></div>
<span class="t" style="left:1483.3px;top:1150.9px;font-size:23.4px;line-height:23.4px;transform-origin:0 50%;transform:scaleX(0.9406);color:#1c1c1c;">Layer Configuration</span>
<div class="a " style="left:1489.6px;top:1190.2px;width:119.9px;height:53.3px;background:linear-gradient(#e0e0e0,#d9d9d9 50%,#cfcfcf);border-radius:4px;box-shadow:inset 0 1px 0 rgba(255,255,255,.5);"></div>
<span class="t" style="left:1522.8px;top:1207.3px;font-size:23.4px;line-height:23.4px;transform-origin:0 50%;transform:scaleX(0.9300);color:#1c1c1c;">Load</span>
<div class="a " style="left:1630.6px;top:1190.2px;width:120.9px;height:53.3px;background:linear-gradient(#e0e0e0,#d9d9d9 50%,#cfcfcf);border-radius:4px;box-shadow:inset 0 1px 0 rgba(255,255,255,.5);"></div>
<span class="t" style="left:1662.6px;top:1207.3px;font-size:23.4px;line-height:23.4px;transform-origin:0 50%;transform:scaleX(0.9300);color:#1c1c1c;">Save</span>
<div class="a " style="left:94.0px;top:1320.6px;width:1698.3px;height:471.0px;border:2px solid #d9d9d9;box-sizing:border-box;"></div>
<div class="a " style="left:105.8px;top:1318.6px;width:163.6px;height:7.0px;background:#f0f0f0;"></div>
<span class="t" style="left:110.8px;top:1311.4px;font-size:23.4px;line-height:23.4px;transform-origin:0 50%;transform:scaleX(0.9012);color:#1c1c1c;">Load Equipment</span>
<div class="a " style="left:133.4px;top:1368.0px;width:26.4px;height:26.4px;background:#fff;border:2px solid #505050;border-radius:50%;box-sizing:border-box;box-shadow:0 0 0 1.5px #dadada;"></div>
<span class="t" style="left:171.5px;top:1373.3px;font-size:23.4px;line-height:23.4px;transform-origin:0 50%;transform:scaleX(0.8909);color:#1c1c1c;">Nuclear Fission Source</span>
<div class="a " style="left:131.7px;top:1428.6px;width:26.4px;height:26.4px;background:#fff;border:2px solid #505050;border-radius:50%;box-sizing:border-box;box-shadow:0 0 0 1.5px #dadada;"></div>
<span class="t" style="left:169.4px;top:1433.6px;font-size:23.4px;line-height:23.4px;transform-origin:0 50%;transform:scaleX(0.8957);color:#1c1c1c;">Nuclear Fusion Source</span>
<div class="a " style="left:131.7px;top:1490.0px;width:26.4px;height:26.4px;background:#fff;border:2px solid #505050;border-radius:50%;box-sizing:border-box;box-shadow:0 0 0 1.5px #dadada;"></div>
<div class="a " style="left:138.4px;top:1496.7px;width:13.0px;height:13.0px;background:#1f1f1f;border-radius:50%;"></div>
<span class="t" style="left:169.4px;top:1494.2px;font-size:23.4px;line-height:23.4px;transform-origin:0 50%;transform:scaleX(0.9142);color:#1c1c1c;">AmBe Laboratory Source</span>
<div class="a " style="left:131.7px;top:1553.8px;width:26.4px;height:26.4px;background:#fff;border:2px solid #505050;border-radius:50%;box-sizing:border-box;box-shadow:0 0 0 1.5px #dadada;"></div>
<span class="t" style="left:169.4px;top:1557.3px;font-size:23.4px;line-height:23.4px;transform-origin:0 50%;transform:scaleX(0.9147);color:#1c1c1c;">Moderated Californium Source</span>
<div class="a " style="left:131.7px;top:1615.2px;width:26.4px;height:26.4px;background:#fff;border:2px solid #505050;border-radius:50%;box-sizing:border-box;box-shadow:0 0 0 1.5px #dadada;"></div>
<span class="t" style="left:169.4px;top:1619.4px;font-size:23.4px;line-height:23.4px;transform-origin:0 50%;transform:scaleX(0.9190);color:#1c1c1c;">Monoenergetic [MeV]</span>
<div class="a " style="left:131.7px;top:1677.2px;width:26.4px;height:26.4px;background:#fff;border:2px solid #505050;border-radius:50%;box-sizing:border-box;box-shadow:0 0 0 1.5px #dadada;"></div>
<span class="t" style="left:169.4px;top:1681.6px;font-size:23.4px;line-height:23.4px;transform-origin:0 50%;transform:scaleX(0.8902);color:#1c1c1c;">Thermal</span>
<div class="a " style="left:131.7px;top:1738.6px;width:26.4px;height:26.4px;background:#fff;border:2px solid #505050;border-radius:50%;box-sizing:border-box;box-shadow:0 0 0 1.5px #dadada;"></div>
<span class="t" style="left:169.4px;top:1743.2px;font-size:23.4px;line-height:23.4px;transform-origin:0 50%;transform:scaleX(0.8956);color:#1c1c1c;">None</span>
<div class="a " style="left:437.0px;top:1610.8px;width:102.7px;height:39.2px;background:#fff;border:2px solid #7d7d7d;box-sizing:border-box;box-shadow:0 0 0 1px #d4d4d4;overflow:hidden;"></div>
<span class="t" style="left:445.0px;top:1622.3px;font-size:22.6px;line-height:22.6px;transform-origin:0 50%;transform:scaleX(1.0200);color:#1c1c1c;">1</span>
<div class="a " style="left:296.0px;top:1742.0px;width:26.0px;height:26.0px;background:#fff;border:2.6px solid #4e4e4e;border-radius:1.5px;box-sizing:border-box;"></div>
<svg class="a" style="left:296.0px;top:1742.0px" width="26.0" height="26.0" viewBox="0 0 26 26"><path d="M5.6 14.6 L10.4 18.6 L22.6 6.2" fill="none" stroke="#484848" stroke-width="2.8"/></svg>
<span class="t" style="left:331.7px;top:1744.9px;font-size:23.4px;line-height:23.4px;transform-origin:0 50%;transform:scaleX(0.9276);color:#1c1c1c;">Thermonuclear Transport</span>
<span class="t" style="left:1240.0px;top:1355.9px;font-size:23.4px;line-height:23.4px;transform-origin:0 50%;transform:scaleX(0.9049);color:#1c1c1c;">x Position</span>
<span class="t" style="left:1365.9px;top:1355.9px;font-size:23.4px;line-height:23.4px;transform-origin:0 50%;transform:scaleX(0.9019);color:#1c1c1c;">y Position</span>
<span class="t" style="left:1486.9px;top:1355.9px;font-size:23.4px;line-height:23.4px;transform-origin:0 50%;transform:scaleX(0.8812);color:#1c1c1c;">z Position</span>
<div class="a " style="left:1240.6px;top:1388.7px;width:102.8px;height:43.5px;background:#fff;border:2px solid #7d7d7d;box-sizing:border-box;box-shadow:0 0 0 1px #d4d4d4;overflow:hidden;"><span class="t" style="left:-7px;top:10.5px;font-size:21px;line-height:21px;letter-spacing:0.4px">0.404587</span></div>
<div class="a " style="left:1366.2px;top:1388.7px;width:102.4px;height:43.5px;background:#fff;border:2px solid #7d7d7d;box-sizing:border-box;box-shadow:0 0 0 1px #d4d4d4;overflow:hidden;"></div>
<span class="t" style="left:1371.5px;top:1402.4px;font-size:22.6px;line-height:22.6px;transform-origin:0 50%;transform:scaleX(1.0200);color:#1c1c1c;">0.03125</span>
<div class="a " style="left:1486.9px;top:1388.7px;width:102.7px;height:43.5px;background:#fff;border:2px solid #7d7d7d;box-sizing:border-box;box-shadow:0 0 0 1px #d4d4d4;overflow:hidden;"></div>
<span class="t" style="left:1493.0px;top:1402.4px;font-size:22.6px;line-height:22.6px;transform-origin:0 50%;transform:scaleX(1.0200);color:#1c1c1c;">-0.225</span>
<span class="t" style="left:1240.0px;top:1450.5px;font-size:23.4px;line-height:23.4px;transform-origin:0 50%;transform:scaleX(0.8741);color:#1c1c1c;">x Size</span>
<span class="t" style="left:1366.0px;top:1450.5px;font-size:23.4px;line-height:23.4px;transform-origin:0 50%;transform:scaleX(0.8568);color:#1c1c1c;">y Size</span>
<span class="t" style="left:1487.0px;top:1450.5px;font-size:23.4px;line-height:23.4px;transform-origin:0 50%;transform:scaleX(0.8286);color:#1c1c1c;">z Size</span>
<span class="t" style="left:1611.4px;top:1450.5px;font-size:23.4px;line-height:23.4px;transform-origin:0 50%;transform:scaleX(0.8814);color:#1c1c1c;">Radius</span>
<div class="a " style="left:1240.6px;top:1483.4px;width:102.8px;height:43.6px;background:#fff;border:2px solid #7d7d7d;box-sizing:border-box;box-shadow:0 0 0 1px #d4d4d4;overflow:hidden;"></div>
<span class="t" style="left:1246.0px;top:1497.1px;font-size:22.6px;line-height:22.6px;transform-origin:0 50%;transform:scaleX(1.0200);color:#1c1c1c;">0</span>
<div class="a " style="left:1366.2px;top:1483.4px;width:102.4px;height:43.6px;background:#fff;border:2px solid #7d7d7d;box-sizing:border-box;box-shadow:0 0 0 1px #d4d4d4;overflow:hidden;"></div>
<span class="t" style="left:1371.5px;top:1497.1px;font-size:22.6px;line-height:22.6px;transform-origin:0 50%;transform:scaleX(1.0200);color:#1c1c1c;">0</span>
<div class="a " style="left:1486.9px;top:1483.4px;width:102.7px;height:43.6px;background:#fff;border:2px solid #7d7d7d;box-sizing:border-box;box-shadow:0 0 0 1px #d4d4d4;overflow:hidden;"></div>
<span class="t" style="left:1493.0px;top:1497.1px;font-size:22.6px;line-height:22.6px;transform-origin:0 50%;transform:scaleX(1.0200);color:#1c1c1c;">0</span>
<div class="a " style="left:1609.0px;top:1483.4px;width:102.3px;height:43.6px;background:#fff;border:2px solid #7d7d7d;box-sizing:border-box;box-shadow:0 0 0 1px #d4d4d4;overflow:hidden;"></div>
<span class="t" style="left:1614.5px;top:1497.1px;font-size:22.6px;line-height:22.6px;transform-origin:0 50%;transform:scaleX(1.0200);color:#1c1c1c;">0</span>
<span class="t" style="left:1243.4px;top:1578.1px;font-size:23.4px;line-height:23.4px;transform-origin:0 50%;transform:scaleX(0.9184);color:#1c1c1c;">Opening Angle</span>
<div class="a " style="left:1244.8px;top:1611.0px;width:122.8px;height:43.3px;background:#fff;border:2px solid #7d7d7d;box-sizing:border-box;box-shadow:0 0 0 1px #d4d4d4;overflow:hidden;"></div>
<span class="t" style="left:1251.0px;top:1624.6px;font-size:22.6px;line-height:22.6px;transform-origin:0 50%;transform:scaleX(1.0200);color:#1c1c1c;">-1</span>
<span class="t" style="left:1243.4px;top:1679.7px;font-size:23.4px;line-height:23.4px;transform-origin:0 50%;transform:scaleX(0.9231);color:#1c1c1c;">Directional Angle</span>
<div class="a " style="left:1244.8px;top:1712.8px;width:122.8px;height:42.5px;background:#fff;border:2px solid #7d7d7d;box-sizing:border-box;box-shadow:0 0 0 1px #d4d4d4;overflow:hidden;"></div>
<span class="t" style="left:1251.0px;top:1726.0px;font-size:22.6px;line-height:22.6px;transform-origin:0 50%;transform:scaleX(1.0200);color:#1c1c1c;">-1</span>
<div class="a " style="left:1487.0px;top:1582.4px;width:225.3px;height:168.6px;border:2px solid #d9d9d9;box-sizing:border-box;"></div>
<div class="a " style="left:1498.7px;top:1580.4px;width:167.8px;height:7.0px;background:#f0f0f0;"></div>
<span class="t" style="left:1503.7px;top:1574.1px;font-size:23.4px;line-height:23.4px;transform-origin:0 50%;transform:scaleX(0.9122);color:#1c1c1c;">Source Direction</span>
<div class="a " style="left:1585.8px;top:1618.3px;width:26.4px;height:26.4px;background:#fff;border:2px solid #505050;border-radius:50%;box-sizing:border-box;box-shadow:0 0 0 1.5px #dadada;"></div>
<div class="a " style="left:1507.0px;top:1661.4px;width:26.4px;height:26.4px;background:#fff;border:2px solid #505050;border-radius:50%;box-sizing:border-box;box-shadow:0 0 0 1.5px #dadada;"></div>
<div class="a " style="left:1585.8px;top:1661.4px;width:26.4px;height:26.4px;background:#fff;border:2px solid #505050;border-radius:50%;box-sizing:border-box;box-shadow:0 0 0 1.5px #dadada;"></div>
<div class="a " style="left:1664.8px;top:1661.4px;width:26.4px;height:26.4px;background:#fff;border:2px solid #505050;border-radius:50%;box-sizing:border-box;box-shadow:0 0 0 1.5px #dadada;"></div>
<div class="a " style="left:1585.8px;top:1701.8px;width:26.4px;height:26.4px;background:#fff;border:2px solid #505050;border-radius:50%;box-sizing:border-box;box-shadow:0 0 0 1.5px #dadada;"></div>
<span class="t" style="left:1557.0px;top:1664.1px;font-size:21px;line-height:21px;color:#1c1c1c;transform:translateX(-50%);">-&gt;</span>
<span class="t" style="left:1641.5px;top:1664.1px;font-size:21px;line-height:21px;color:#1c1c1c;transform:translateX(-50%);">&lt;-</span>
<span class="t" style="left:1807.5px;top:190.8px;font-size:41.5px;line-height:41.5px;transform-origin:0 50%;transform:scaleX(0.9468);color:#1f67ab;">Live:</span>
<div class="a " style="left:1901.5px;top:179.0px;width:274.5px;height:54.0px;background:#00599f;border-radius:7px 7px 0 0;"></div>
<span class="t" style="left:1915.4px;top:197.8px;font-size:23.4px;line-height:23.4px;transform-origin:0 50%;transform:scaleX(0.9170);color:#fff;">Birds-eye View &amp; Spectra</span>
<div class="a " style="left:2182.0px;top:189.8px;width:144.5px;height:42.2px;background:linear-gradient(#e9e9e9,#dedede 60%,#d3d3d3);border-radius:6px 6px 0 0;box-shadow:inset 0 1px 0 #f4f4f4;"></div>
<span class="t" style="left:2196.0px;top:201.2px;font-size:23.4px;line-height:23.4px;transform-origin:0 50%;transform:scaleX(0.8986);color:#5a5a5a;">Range View</span>
<div class="a " style="left:2333.0px;top:189.8px;width:147.0px;height:42.2px;background:linear-gradient(#e9e9e9,#dedede 60%,#d3d3d3);border-radius:6px 6px 0 0;box-shadow:inset 0 1px 0 #f4f4f4;"></div>
<span class="t" style="left:2347.5px;top:201.2px;font-size:23.4px;line-height:23.4px;transform-origin:0 50%;transform:scaleX(0.8960);color:#5a5a5a;">Spatial View</span>
<div class="a " style="left:2486.6px;top:189.8px;width:141.0px;height:42.2px;background:linear-gradient(#e9e9e9,#dedede 60%,#d3d3d3);border-radius:6px 6px 0 0;box-shadow:inset 0 1px 0 #f4f4f4;"></div>
<span class="t" style="left:2513.6px;top:201.2px;font-size:23.4px;line-height:23.4px;transform-origin:0 50%;transform:scaleX(0.9476);color:#5a5a5a;">Detector</span>
<div class="a " style="left:1810.0px;top:231.7px;width:1072.3px;height:1565.7px;background:#00599f;"></div>
<span class="t" style="left:2685.5px;top:251.9px;font-size:15px;line-height:15px;transform-origin:0 50%;transform:scaleX(0.9625);color:#6d9fce;">1421852064</span>
<div class="a " style="left:2786.0px;top:236.0px;width:39.7px;height:39.0px;background:linear-gradient(#ebebeb,#dedede 45%,#d2d2d2);border-radius:5px;box-shadow:inset 0 0 0 1px rgba(255,255,255,.55),0 1px 2px rgba(0,0,0,.35);"></div>
<span class="t" style="left:2798.6px;top:245.7px;font-size:25px;line-height:25px;transform-origin:0 50%;transform:scaleX(1.0000);color:#1c1c1c;">+</span>
<div class="a " style="left:2836.5px;top:236.0px;width:39.5px;height:39.0px;background:linear-gradient(#ebebeb,#dedede 45%,#d2d2d2);border-radius:5px;box-shadow:inset 0 0 0 1px rgba(255,255,255,.55),0 1px 2px rgba(0,0,0,.35);"></div>
<span class="t" style="left:2849.0px;top:245.7px;font-size:25px;line-height:25px;transform-origin:0 50%;transform:scaleX(1.0000);color:#1c1c1c;">+</span>
<svg class="a" style="left:1960.0px;top:284.3px;overflow:hidden" width="881.5" height="906.0" viewBox="0 0 881.5 906.0">
<defs><filter id="b22" x="-30%" y="-30%" width="160%" height="160%" color-interpolation-filters="sRGB"><feGaussianBlur stdDeviation="17"/></filter><filter id="b14" x="-30%" y="-30%" width="160%" height="160%" color-interpolation-filters="sRGB"><feGaussianBlur stdDeviation="12"/></filter><filter id="b9" x="-30%" y="-30%" width="160%" height="160%" color-interpolation-filters="sRGB"><feGaussianBlur stdDeviation="8"/></filter><filter id="b6" x="-30%" y="-30%" width="160%" height="160%" color-interpolation-filters="sRGB"><feGaussianBlur stdDeviation="5"/></filter><filter id="b3" x="-30%" y="-30%" width="160%" height="160%" color-interpolation-filters="sRGB"><feGaussianBlur stdDeviation="2.6"/></filter><filter id="b1" x="-30%" y="-30%" width="160%" height="160%" color-interpolation-filters="sRGB"><feGaussianBlur stdDeviation="1.1"/></filter><filter id="b40" x="-30%" y="-30%" width="160%" height="160%" color-interpolation-filters="sRGB"><feGaussianBlur stdDeviation="34"/></filter><filter id="b60" x="-30%" y="-30%" width="160%" height="160%" color-interpolation-filters="sRGB"><feGaussianBlur stdDeviation="55"/></filter>
<linearGradient id="ing" x1="0" x2="1" y1="0" y2="0"><stop offset="0" stop-color="#0014cc"/><stop offset="0.3" stop-color="#001adc"/><stop offset="0.6" stop-color="#0028f0"/><stop offset="1" stop-color="#0040ff"/></linearGradient>
<linearGradient id="edg" x1="0" x2="1" y1="0" y2="0"><stop offset="0" stop-color="#0030e8" stop-opacity="0"/><stop offset="0.25" stop-color="#0444f4" stop-opacity="0.6"/><stop offset="0.55" stop-color="#2fa4fc" stop-opacity="0.95"/><stop offset="0.8" stop-color="#62d4ff"/><stop offset="1" stop-color="#48beff"/></linearGradient>
<radialGradient id="glow" cx="0.5" cy="0.5" r="0.5"><stop offset="0" stop-color="#c8ffff"/><stop offset="0.10" stop-color="#7af0ff" stop-opacity="0.98"/><stop offset="0.22" stop-color="#46d6ff" stop-opacity="0.92"/><stop offset="0.40" stop-color="#22a8ff" stop-opacity="0.88"/><stop offset="0.60" stop-color="#0c78fd" stop-opacity="0.64"/><stop offset="0.82" stop-color="#0454f9" stop-opacity="0.3"/><stop offset="1" stop-color="#0040f4" stop-opacity="0"/></radialGradient>
<radialGradient id="spot" cx="0.5" cy="0.5" r="0.5"><stop offset="0" stop-color="#0c5cff"/><stop offset="0.22" stop-color="#0234ec" stop-opacity="0.85"/><stop offset="0.6" stop-color="#001cc0" stop-opacity="0.45"/><stop offset="1" stop-color="#0014a8" stop-opacity="0"/></radialGradient>
<linearGradient id="mfade" x1="0" x2="1" y1="0" y2="0"><stop offset="0" stop-color="#fff"/><stop offset="0.8571" stop-color="#fff"/><stop offset="0.9000" stop-color="#888"/><stop offset="0.9500" stop-color="#000"/><stop offset="1" stop-color="#000"/></linearGradient>
<mask id="gm" maskUnits="userSpaceOnUse" x="0" y="0" width="881.5" height="906.0"><rect width="881.5" height="906.0" fill="url(#mfade)"/></mask>
<filter id="grain" x="0" y="0" width="100%" height="100%" color-interpolation-filters="sRGB"><feTurbulence type="fractalNoise" baseFrequency="0.13" numOctaves="2" seed="5" result="n"/><feColorMatrix in="n" type="matrix" values="1.5 0 0 0 -0.25  1.5 0 0 0 -0.25  1.5 0 0 0 -0.25  0 0 0 0 1" result="c"/><feGaussianBlur in="c" stdDeviation="1.1"/></filter>
</defs>
<rect width="881.5" height="906.0" fill="#000031"/>
<g filter="url(#b22)">
<rect x="78.7" y="74.4" width="198.3" height="320.3" fill="#000c88" rx="60"/>
<rect x="78.7" y="530.7" width="198.3" height="300.9" fill="#000c88" rx="60"/>
<rect x="157.4" y="368.9" width="119.6" height="187.7" fill="#000a74"/>
<rect x="261.3" y="77.7" width="242.4" height="750.7" fill="#0012a4"/>
</g>
<g filter="url(#b9)"><rect x="270.7" y="75.7" width="540.2" height="754.6" fill="#0014aa" rx="18"/></g>
<g filter="url(#b14)" opacity="0.9"><rect x="528.9" y="79.0" width="278.9" height="748.1" fill="#0030e0" rx="16"/></g>
<g filter="url(#b40)" opacity="0.7"><rect x="365.2" y="84.1" width="264.4" height="737.7" fill="#0028d0"/></g>
<g filter="url(#b3)"><rect x="258.2" y="129.4" width="498.7" height="647.1" fill="url(#ing)"/></g>
<g filter="url(#b3)" opacity="0.55"><rect x="256.9" y="129.4" width="5.7" height="647.1" fill="#0838ee"/><rect x="258.2" y="128.1" width="497.4" height="5.2" fill="#0a40f2"/><rect x="258.2" y="772.7" width="497.4" height="5.2" fill="#0a40f2"/></g>
<g filter="url(#b9)"><rect x="277.0" y="102.2" width="488.0" height="25.2" fill="url(#edg)"/><rect x="277.0" y="778.5" width="488.0" height="25.2" fill="url(#edg)"/></g>
<g filter="url(#b6)" opacity="0.85"><rect x="754.9" y="116.5" width="14.5" height="673.0" fill="#1c8cff"/></g>
<g mask="url(#gm)"><ellipse cx="793.4" cy="440.1" rx="503.7" ry="401.2" fill="url(#glow)"/></g>
<g filter="url(#b9)" opacity="0.92"><rect x="262.6" y="264.0" width="52.3" height="377.9" fill="#000668"/></g>
<g filter="url(#b14)" opacity="0.16"><rect x="377.8" y="258.9" width="88.1" height="388.3" fill="#0220a8"/></g>
<g filter="url(#b1)"><rect x="306.6" y="257.6" width="92.6" height="390.9" fill="#000038"/></g>
<ellipse cx="214.1" cy="472.4" rx="84" ry="86" fill="url(#spot)"/>
<g filter="url(#b9)"><path d="M753.5 272.9 A76.2 162.7 0 0 1 753.5 598.2Z" fill="#5cd8ff" opacity="0.9"/></g>
<g filter="url(#b6)"><path d="M757.5 294.9 A67.2 140.7 0 0 1 757.5 576.2Z" fill="#d8fbff"/></g>
<g filter="url(#b3)"><path d="M758.5 306.9 A59.2 128.7 0 0 1 758.5 564.2Z" fill="#ffffff"/></g>
<rect x="0" y="0" width="881.5" height="906.0" filter="url(#grain)" style="mix-blend-mode:overlay" opacity="0.24"/>
<rect x="0" y="0" width="881.5" height="3" fill="#00001c"/>
<rect x="878.5" y="0" width="3" height="906.0" fill="#00001c"/>
<rect x="0" y="5" width="2" height="906.0" fill="#a3c2e1"/>
<rect x="0" y="872.6" width="6.2" height="2" fill="#a3c2e1"/>
<rect x="30.5" y="901.4" width="2" height="4.6" fill="#a3c2e1"/>
<rect x="30.5" y="0" width="2" height="6" fill="#00001c"/>
<rect x="875.5" y="872.6" width="6" height="2" fill="#00001c"/>
<rect x="0" y="840.3" width="6.2" height="2" fill="#a3c2e1"/>
<rect x="62.0" y="901.4" width="2" height="4.6" fill="#a3c2e1"/>
<rect x="62.0" y="0" width="2" height="6" fill="#00001c"/>
<rect x="875.5" y="840.3" width="6" height="2" fill="#00001c"/>
<rect x="0" y="807.9" width="6.2" height="2" fill="#a3c2e1"/>
<rect x="93.4" y="901.4" width="2" height="4.6" fill="#a3c2e1"/>
<rect x="93.4" y="0" width="2" height="6" fill="#00001c"/>
<rect x="875.5" y="807.9" width="6" height="2" fill="#00001c"/>
<rect x="0" y="775.6" width="12" height="2" fill="#a3c2e1"/>
<rect x="124.9" y="895.5" width="2.1" height="10.5" fill="#00000c"/>
<rect x="124.9" y="0" width="2" height="12" fill="#00001c"/>
<rect x="869.5" y="775.6" width="12" height="2" fill="#00001c"/>
<rect x="0" y="743.2" width="6.2" height="2" fill="#a3c2e1"/>
<rect x="156.4" y="901.4" width="2" height="4.6" fill="#a3c2e1"/>
<rect x="156.4" y="0" width="2" height="6" fill="#00001c"/>
<rect x="875.5" y="743.2" width="6" height="2" fill="#00001c"/>
<rect x="0" y="710.9" width="6.2" height="2" fill="#a3c2e1"/>
<rect x="187.9" y="901.4" width="2" height="4.6" fill="#a3c2e1"/>
<rect x="187.9" y="0" width="2" height="6" fill="#00001c"/>
<rect x="875.5" y="710.9" width="6" height="2" fill="#00001c"/>
<rect x="0" y="678.5" width="6.2" height="2" fill="#a3c2e1"/>
<rect x="219.4" y="901.4" width="2" height="4.6" fill="#a3c2e1"/>
<rect x="219.4" y="0" width="2" height="6" fill="#00001c"/>
<rect x="875.5" y="678.5" width="6" height="2" fill="#00001c"/>
<rect x="0" y="646.1" width="6.2" height="2" fill="#a3c2e1"/>
<rect x="250.9" y="901.4" width="2" height="4.6" fill="#a3c2e1"/>
<rect x="250.9" y="0" width="2" height="6" fill="#00001c"/>
<rect x="875.5" y="646.1" width="6" height="2" fill="#00001c"/>
<rect x="0" y="613.8" width="12" height="2" fill="#a3c2e1"/>
<rect x="282.3" y="895.5" width="2.1" height="10.5" fill="#00000c"/>
<rect x="282.3" y="0" width="2" height="12" fill="#00001c"/>
<rect x="869.5" y="613.8" width="12" height="2" fill="#00001c"/>
<rect x="0" y="581.4" width="6.2" height="2" fill="#a3c2e1"/>
<rect x="313.8" y="901.4" width="2" height="4.6" fill="#a3c2e1"/>
<rect x="313.8" y="0" width="2" height="6" fill="#00001c"/>
<rect x="875.5" y="581.4" width="6" height="2" fill="#00001c"/>
<rect x="0" y="549.1" width="6.2" height="2" fill="#a3c2e1"/>
<rect x="345.3" y="901.4" width="2" height="4.6" fill="#a3c2e1"/>
<rect x="345.3" y="0" width="2" height="6" fill="#00001c"/>
<rect x="875.5" y="549.1" width="6" height="2" fill="#00001c"/>
<rect x="0" y="516.7" width="6.2" height="2" fill="#a3c2e1"/>
<rect x="376.8" y="901.4" width="2" height="4.6" fill="#a3c2e1"/>
<rect x="376.8" y="0" width="2" height="6" fill="#00001c"/>
<rect x="875.5" y="516.7" width="6" height="2" fill="#00001c"/>
<rect x="0" y="484.4" width="6.2" height="2" fill="#a3c2e1"/>
<rect x="408.3" y="901.4" width="2" height="4.6" fill="#a3c2e1"/>
<rect x="408.3" y="0" width="2" height="6" fill="#00001c"/>
<rect x="875.5" y="484.4" width="6" height="2" fill="#00001c"/>
<rect x="0" y="452.0" width="12" height="2" fill="#a3c2e1"/>
<rect x="439.8" y="895.5" width="2.1" height="10.5" fill="#00000c"/>
<rect x="439.8" y="0" width="2" height="12" fill="#00001c"/>
<rect x="869.5" y="452.0" width="12" height="2" fill="#00001c"/>
<rect x="0" y="419.6" width="6.2" height="2" fill="#a3c2e1"/>
<rect x="471.2" y="901.4" width="2" height="4.6" fill="#a3c2e1"/>
<rect x="471.2" y="0" width="2" height="6" fill="#00001c"/>
<rect x="875.5" y="419.6" width="6" height="2" fill="#00001c"/>
<rect x="0" y="387.3" width="6.2" height="2" fill="#a3c2e1"/>
<rect x="502.7" y="901.4" width="2" height="4.6" fill="#a3c2e1"/>
<rect x="502.7" y="0" width="2" height="6" fill="#00001c"/>
<rect x="875.5" y="387.3" width="6" height="2" fill="#00001c"/>
<rect x="0" y="354.9" width="6.2" height="2" fill="#a3c2e1"/>
<rect x="534.2" y="901.4" width="2" height="4.6" fill="#a3c2e1"/>
<rect x="534.2" y="0" width="2" height="6" fill="#00001c"/>
<rect x="875.5" y="354.9" width="6" height="2" fill="#00001c"/>
<rect x="0" y="322.6" width="6.2" height="2" fill="#a3c2e1"/>
<rect x="565.7" y="901.4" width="2" height="4.6" fill="#a3c2e1"/>
<rect x="565.7" y="0" width="2" height="6" fill="#00001c"/>
<rect x="875.5" y="322.6" width="6" height="2" fill="#00001c"/>
<rect x="0" y="290.2" width="12" height="2" fill="#a3c2e1"/>
<rect x="597.2" y="895.5" width="2.1" height="10.5" fill="#00000c"/>
<rect x="597.2" y="0" width="2" height="12" fill="#00001c"/>
<rect x="869.5" y="290.2" width="12" height="2" fill="#00001c"/>
<rect x="0" y="257.9" width="6.2" height="2" fill="#a3c2e1"/>
<rect x="628.6" y="901.4" width="2" height="4.6" fill="#a3c2e1"/>
<rect x="628.6" y="0" width="2" height="6" fill="#00001c"/>
<rect x="875.5" y="257.9" width="6" height="2" fill="#00001c"/>
<rect x="0" y="225.5" width="6.2" height="2" fill="#a3c2e1"/>
<rect x="660.1" y="901.4" width="2" height="4.6" fill="#a3c2e1"/>
<rect x="660.1" y="0" width="2" height="6" fill="#00001c"/>
<rect x="875.5" y="225.5" width="6" height="2" fill="#00001c"/>
<rect x="0" y="193.1" width="6.2" height="2" fill="#a3c2e1"/>
<rect x="691.6" y="901.4" width="2" height="4.6" fill="#a3c2e1"/>
<rect x="691.6" y="0" width="2" height="6" fill="#00001c"/>
<rect x="875.5" y="193.1" width="6" height="2" fill="#00001c"/>
<rect x="0" y="160.8" width="6.2" height="2" fill="#a3c2e1"/>
<rect x="723.1" y="901.4" width="2" height="4.6" fill="#a3c2e1"/>
<rect x="723.1" y="0" width="2" height="6" fill="#00001c"/>
<rect x="875.5" y="160.8" width="6" height="2" fill="#00001c"/>
<rect x="0" y="128.4" width="12" height="2" fill="#a3c2e1"/>
<rect x="754.6" y="895.5" width="2.1" height="10.5" fill="#00000c"/>
<rect x="754.6" y="0" width="2" height="12" fill="#00001c"/>
<rect x="869.5" y="128.4" width="12" height="2" fill="#00001c"/>
<rect x="0" y="96.1" width="6.2" height="2" fill="#a3c2e1"/>
<rect x="786.1" y="901.4" width="2" height="4.6" fill="#a3c2e1"/>
<rect x="786.1" y="0" width="2" height="6" fill="#00001c"/>
<rect x="875.5" y="96.1" width="6" height="2" fill="#00001c"/>
<rect x="0" y="63.7" width="6.2" height="2" fill="#a3c2e1"/>
<rect x="817.5" y="901.4" width="2" height="4.6" fill="#a3c2e1"/>
<rect x="817.5" y="0" width="2" height="6" fill="#00001c"/>
<rect x="875.5" y="63.7" width="6" height="2" fill="#00001c"/>
<rect x="0" y="31.4" width="6.2" height="2" fill="#a3c2e1"/>
<rect x="849.0" y="901.4" width="2" height="4.6" fill="#a3c2e1"/>
<rect x="849.0" y="0" width="2" height="6" fill="#00001c"/>
<rect x="875.5" y="31.4" width="6" height="2" fill="#00001c"/>
</svg>
<div class="a " style="left:1960.0px;top:1190.0px;width:881.5px;height:2.1px;background:#a9c9e6;"></div>
<span class="t" style="left:1915.4px;top:404.1px;font-size:23.7px;line-height:23.7px;transform-origin:0 50%;transform:scaleX(1.0000);color:#82b1dc;">0,5</span>
<span class="t" style="left:2697.6px;top:1199.7px;font-size:23.7px;line-height:23.7px;transform-origin:0 50%;transform:scaleX(1.0000);color:#82b1dc;">0,5</span>
<span class="t" style="left:1902.2px;top:565.9px;font-size:23.7px;line-height:23.7px;transform-origin:0 50%;transform:scaleX(1.0000);color:#82b1dc;">0,25</span>
<span class="t" style="left:2533.6px;top:1199.7px;font-size:23.7px;line-height:23.7px;transform-origin:0 50%;transform:scaleX(1.0000);color:#82b1dc;">0,25</span>
<span class="t" style="left:1935.1px;top:727.7px;font-size:23.7px;line-height:23.7px;transform-origin:0 50%;transform:scaleX(1.0000);color:#82b1dc;">0</span>
<span class="t" style="left:2392.7px;top:1199.7px;font-size:23.7px;line-height:23.7px;transform-origin:0 50%;transform:scaleX(1.0000);color:#82b1dc;">0</span>
<span class="t" style="left:1894.3px;top:889.5px;font-size:23.7px;line-height:23.7px;transform-origin:0 50%;transform:scaleX(1.0000);color:#82b1dc;">-0,25</span>
<span class="t" style="left:2214.8px;top:1199.7px;font-size:23.7px;line-height:23.7px;transform-origin:0 50%;transform:scaleX(1.0000);color:#82b1dc;">-0,25</span>
<span class="t" style="left:1907.5px;top:1051.3px;font-size:23.7px;line-height:23.7px;transform-origin:0 50%;transform:scaleX(1.0000);color:#82b1dc;">-0,5</span>
<span class="t" style="left:2064.0px;top:1199.7px;font-size:23.7px;line-height:23.7px;transform-origin:0 50%;transform:scaleX(1.0000);color:#82b1dc;">-0,5</span>
<span class="t" style="left:2372.2px;top:1231.0px;font-size:23px;line-height:23px;transform-origin:0 50%;transform:scaleX(0.9693);color:#82b1dc;">x [m]</span>
<span class="t" style="left:1863.5px;top:738.9px;font-size:23px;line-height:23px;color:#82b1dc;transform:translate(-50%,-50%) rotate(-90deg)">y [m]</span>
<div class="a " style="left:2084.9px;top:1189.5px;width:2.1px;height:2.5px;background:#00000c;"></div>
<div class="a " style="left:2242.3px;top:1189.5px;width:2.1px;height:2.5px;background:#00000c;"></div>
<div class="a " style="left:2399.8px;top:1189.5px;width:2.1px;height:2.5px;background:#00000c;"></div>
<div class="a " style="left:2557.2px;top:1189.5px;width:2.1px;height:2.5px;background:#00000c;"></div>
<div class="a " style="left:2714.6px;top:1189.5px;width:2.1px;height:2.5px;background:#00000c;"></div>
<svg class="a" style="left:0;top:0" width="2916" height="1884" viewBox="0 0 2916 1884">
<line x1="1961.0" x2="2833.0" y1="1641.9" y2="1641.9" stroke="#a9c6e2" stroke-width="2" stroke-dasharray="2 3.2"/>
<line x1="1961.0" x2="2833.0" y1="1588.4" y2="1588.4" stroke="#a9c6e2" stroke-width="2" stroke-dasharray="2 3.2"/>
<line x1="1961.0" x2="2833.0" y1="1534.8" y2="1534.8" stroke="#a9c6e2" stroke-width="2" stroke-dasharray="2 3.2"/>
<line x1="1961.0" x2="2833.0" y1="1481.3" y2="1481.3" stroke="#a9c6e2" stroke-width="2" stroke-dasharray="2 3.2"/>
<line x1="1961.0" x2="2833.0" y1="1427.8" y2="1427.8" stroke="#a9c6e2" stroke-width="2" stroke-dasharray="2 3.2"/>
<line x1="1961.0" x2="2833.0" y1="1374.3" y2="1374.3" stroke="#a9c6e2" stroke-width="2" stroke-dasharray="2 3.2"/>
<line x1="1961.0" x2="2833.0" y1="1320.8" y2="1320.8" stroke="#a9c6e2" stroke-width="2" stroke-dasharray="2 3.2"/>
<line x1="2079.8" x2="2079.8" y1="1322.5" y2="1691.4" stroke="#a9c6e2" stroke-width="2" stroke-dasharray="2 3.2"/>
<line x1="2231.2" x2="2231.2" y1="1322.5" y2="1691.4" stroke="#a9c6e2" stroke-width="2" stroke-dasharray="2 3.2"/>
<line x1="2382.6" x2="2382.6" y1="1322.5" y2="1691.4" stroke="#a9c6e2" stroke-width="2" stroke-dasharray="2 3.2"/>
<line x1="2534.0" x2="2534.0" y1="1322.5" y2="1691.4" stroke="#a9c6e2" stroke-width="2" stroke-dasharray="2 3.2"/>
<line x1="2685.4" x2="2685.4" y1="1322.5" y2="1691.4" stroke="#a9c6e2" stroke-width="2" stroke-dasharray="2 3.2"/>
<line x1="1954.0" x2="1954.0" y1="1317.5" y2="1697.4" stroke="#c5d6e8" stroke-width="2.6"/>
<line x1="1953.0" x2="2837.0" y1="1696.2" y2="1696.2" stroke="#c5d6e8" stroke-width="2.6"/>
<line x1="1953.0" x2="1965.0" y1="1695.4" y2="1695.4" stroke="#c5d6e8" stroke-width="2"/>
<line x1="1953.0" x2="1959.0" y1="1684.7" y2="1684.7" stroke="#c5d6e8" stroke-width="2"/>
<line x1="1953.0" x2="1959.0" y1="1674.0" y2="1674.0" stroke="#c5d6e8" stroke-width="2"/>
<line x1="1953.0" x2="1959.0" y1="1663.3" y2="1663.3" stroke="#c5d6e8" stroke-width="2"/>
<line x1="1953.0" x2="1959.0" y1="1652.6" y2="1652.6" stroke="#c5d6e8" stroke-width="2"/>
<line x1="1953.0" x2="1965.0" y1="1641.9" y2="1641.9" stroke="#c5d6e8" stroke-width="2"/>
<line x1="1953.0" x2="1959.0" y1="1631.2" y2="1631.2" stroke="#c5d6e8" stroke-width="2"/>
<line x1="1953.0" x2="1959.0" y1="1620.5" y2="1620.5" stroke="#c5d6e8" stroke-width="2"/>
<line x1="1953.0" x2="1959.0" y1="1609.8" y2="1609.8" stroke="#c5d6e8" stroke-width="2"/>
<line x1="1953.0" x2="1959.0" y1="1599.1" y2="1599.1" stroke="#c5d6e8" stroke-width="2"/>
<line x1="1953.0" x2="1965.0" y1="1588.4" y2="1588.4" stroke="#c5d6e8" stroke-width="2"/>
<line x1="1953.0" x2="1959.0" y1="1577.7" y2="1577.7" stroke="#c5d6e8" stroke-width="2"/>
<line x1="1953.0" x2="1959.0" y1="1567.0" y2="1567.0" stroke="#c5d6e8" stroke-width="2"/>
<line x1="1953.0" x2="1959.0" y1="1556.2" y2="1556.2" stroke="#c5d6e8" stroke-width="2"/>
<line x1="1953.0" x2="1959.0" y1="1545.5" y2="1545.5" stroke="#c5d6e8" stroke-width="2"/>
<line x1="1953.0" x2="1965.0" y1="1534.8" y2="1534.8" stroke="#c5d6e8" stroke-width="2"/>
<line x1="1953.0" x2="1959.0" y1="1524.1" y2="1524.1" stroke="#c5d6e8" stroke-width="2"/>
<line x1="1953.0" x2="1959.0" y1="1513.4" y2="1513.4" stroke="#c5d6e8" stroke-width="2"/>
<line x1="1953.0" x2="1959.0" y1="1502.7" y2="1502.7" stroke="#c5d6e8" stroke-width="2"/>
<line x1="1953.0" x2="1959.0" y1="1492.0" y2="1492.0" stroke="#c5d6e8" stroke-width="2"/>
<line x1="1953.0" x2="1965.0" y1="1481.3" y2="1481.3" stroke="#c5d6e8" stroke-width="2"/>
<line x1="1953.0" x2="1959.0" y1="1470.6" y2="1470.6" stroke="#c5d6e8" stroke-width="2"/>
<line x1="1953.0" x2="1959.0" y1="1459.9" y2="1459.9" stroke="#c5d6e8" stroke-width="2"/>
<line x1="1953.0" x2="1959.0" y1="1449.2" y2="1449.2" stroke="#c5d6e8" stroke-width="2"/>
<line x1="1953.0" x2="1959.0" y1="1438.5" y2="1438.5" stroke="#c5d6e8" stroke-width="2"/>
<line x1="1953.0" x2="1965.0" y1="1427.8" y2="1427.8" stroke="#c5d6e8" stroke-width="2"/>
<line x1="1953.0" x2="1959.0" y1="1417.1" y2="1417.1" stroke="#c5d6e8" stroke-width="2"/>
<line x1="1953.0" x2="1959.0" y1="1406.4" y2="1406.4" stroke="#c5d6e8" stroke-width="2"/>
<line x1="1953.0" x2="1959.0" y1="1395.7" y2="1395.7" stroke="#c5d6e8" stroke-width="2"/>
<line x1="1953.0" x2="1959.0" y1="1385.0" y2="1385.0" stroke="#c5d6e8" stroke-width="2"/>
<line x1="1953.0" x2="1965.0" y1="1374.3" y2="1374.3" stroke="#c5d6e8" stroke-width="2"/>
<line x1="1953.0" x2="1959.0" y1="1363.6" y2="1363.6" stroke="#c5d6e8" stroke-width="2"/>
<line x1="1953.0" x2="1959.0" y1="1352.9" y2="1352.9" stroke="#c5d6e8" stroke-width="2"/>
<line x1="1953.0" x2="1959.0" y1="1342.2" y2="1342.2" stroke="#c5d6e8" stroke-width="2"/>
<line x1="1953.0" x2="1959.0" y1="1331.5" y2="1331.5" stroke="#c5d6e8" stroke-width="2"/>
<line x1="1953.0" x2="1965.0" y1="1320.8" y2="1320.8" stroke="#c5d6e8" stroke-width="2"/>
<line x1="2004.1" x2="2004.1" y1="1695.4" y2="1688.4" stroke="#c5d6e8" stroke-width="2"/>
<line x1="2026.9" x2="2026.9" y1="1695.4" y2="1690.8" stroke="#c5d6e8" stroke-width="2"/>
<line x1="2040.2" x2="2040.2" y1="1695.4" y2="1690.8" stroke="#c5d6e8" stroke-width="2"/>
<line x1="2049.7" x2="2049.7" y1="1695.4" y2="1690.8" stroke="#c5d6e8" stroke-width="2"/>
<line x1="2057.0" x2="2057.0" y1="1695.4" y2="1690.8" stroke="#c5d6e8" stroke-width="2"/>
<line x1="2063.0" x2="2063.0" y1="1695.4" y2="1690.8" stroke="#c5d6e8" stroke-width="2"/>
<line x1="2068.1" x2="2068.1" y1="1695.4" y2="1690.8" stroke="#c5d6e8" stroke-width="2"/>
<line x1="2072.5" x2="2072.5" y1="1695.4" y2="1690.8" stroke="#c5d6e8" stroke-width="2"/>
<line x1="2076.3" x2="2076.3" y1="1695.4" y2="1690.8" stroke="#c5d6e8" stroke-width="2"/>
<line x1="2079.8" x2="2079.8" y1="1695.4" y2="1683.4" stroke="#c5d6e8" stroke-width="2"/>
<line x1="2155.5" x2="2155.5" y1="1695.4" y2="1688.4" stroke="#c5d6e8" stroke-width="2"/>
<line x1="2178.3" x2="2178.3" y1="1695.4" y2="1690.8" stroke="#c5d6e8" stroke-width="2"/>
<line x1="2191.6" x2="2191.6" y1="1695.4" y2="1690.8" stroke="#c5d6e8" stroke-width="2"/>
<line x1="2201.1" x2="2201.1" y1="1695.4" y2="1690.8" stroke="#c5d6e8" stroke-width="2"/>
<line x1="2208.4" x2="2208.4" y1="1695.4" y2="1690.8" stroke="#c5d6e8" stroke-width="2"/>
<line x1="2214.4" x2="2214.4" y1="1695.4" y2="1690.8" stroke="#c5d6e8" stroke-width="2"/>
<line x1="2219.5" x2="2219.5" y1="1695.4" y2="1690.8" stroke="#c5d6e8" stroke-width="2"/>
<line x1="2223.9" x2="2223.9" y1="1695.4" y2="1690.8" stroke="#c5d6e8" stroke-width="2"/>
<line x1="2227.7" x2="2227.7" y1="1695.4" y2="1690.8" stroke="#c5d6e8" stroke-width="2"/>
<line x1="2231.2" x2="2231.2" y1="1695.4" y2="1683.4" stroke="#c5d6e8" stroke-width="2"/>
<line x1="2306.9" x2="2306.9" y1="1695.4" y2="1688.4" stroke="#c5d6e8" stroke-width="2"/>
<line x1="2329.7" x2="2329.7" y1="1695.4" y2="1690.8" stroke="#c5d6e8" stroke-width="2"/>
<line x1="2343.0" x2="2343.0" y1="1695.4" y2="1690.8" stroke="#c5d6e8" stroke-width="2"/>
<line x1="2352.5" x2="2352.5" y1="1695.4" y2="1690.8" stroke="#c5d6e8" stroke-width="2"/>
<line x1="2359.8" x2="2359.8" y1="1695.4" y2="1690.8" stroke="#c5d6e8" stroke-width="2"/>
<line x1="2365.8" x2="2365.8" y1="1695.4" y2="1690.8" stroke="#c5d6e8" stroke-width="2"/>
<line x1="2370.9" x2="2370.9" y1="1695.4" y2="1690.8" stroke="#c5d6e8" stroke-width="2"/>
<line x1="2375.3" x2="2375.3" y1="1695.4" y2="1690.8" stroke="#c5d6e8" stroke-width="2"/>
<line x1="2379.1" x2="2379.1" y1="1695.4" y2="1690.8" stroke="#c5d6e8" stroke-width="2"/>
<line x1="2382.6" x2="2382.6" y1="1695.4" y2="1683.4" stroke="#c5d6e8" stroke-width="2"/>
<line x1="2458.3" x2="2458.3" y1="1695.4" y2="1688.4" stroke="#c5d6e8" stroke-width="2"/>
<line x1="2481.1" x2="2481.1" y1="1695.4" y2="1690.8" stroke="#c5d6e8" stroke-width="2"/>
<line x1="2494.4" x2="2494.4" y1="1695.4" y2="1690.8" stroke="#c5d6e8" stroke-width="2"/>
<line x1="2503.9" x2="2503.9" y1="1695.4" y2="1690.8" stroke="#c5d6e8" stroke-width="2"/>
<line x1="2511.2" x2="2511.2" y1="1695.4" y2="1690.8" stroke="#c5d6e8" stroke-width="2"/>
<line x1="2517.2" x2="2517.2" y1="1695.4" y2="1690.8" stroke="#c5d6e8" stroke-width="2"/>
<line x1="2522.3" x2="2522.3" y1="1695.4" y2="1690.8" stroke="#c5d6e8" stroke-width="2"/>
<line x1="2526.7" x2="2526.7" y1="1695.4" y2="1690.8" stroke="#c5d6e8" stroke-width="2"/>
<line x1="2530.5" x2="2530.5" y1="1695.4" y2="1690.8" stroke="#c5d6e8" stroke-width="2"/>
<line x1="2534.0" x2="2534.0" y1="1695.4" y2="1683.4" stroke="#c5d6e8" stroke-width="2"/>
<line x1="2609.7" x2="2609.7" y1="1695.4" y2="1688.4" stroke="#c5d6e8" stroke-width="2"/>
<line x1="2632.5" x2="2632.5" y1="1695.4" y2="1690.8" stroke="#c5d6e8" stroke-width="2"/>
<line x1="2645.8" x2="2645.8" y1="1695.4" y2="1690.8" stroke="#c5d6e8" stroke-width="2"/>
<line x1="2655.3" x2="2655.3" y1="1695.4" y2="1690.8" stroke="#c5d6e8" stroke-width="2"/>
<line x1="2662.6" x2="2662.6" y1="1695.4" y2="1690.8" stroke="#c5d6e8" stroke-width="2"/>
<line x1="2668.6" x2="2668.6" y1="1695.4" y2="1690.8" stroke="#c5d6e8" stroke-width="2"/>
<line x1="2673.7" x2="2673.7" y1="1695.4" y2="1690.8" stroke="#c5d6e8" stroke-width="2"/>
<line x1="2678.1" x2="2678.1" y1="1695.4" y2="1690.8" stroke="#c5d6e8" stroke-width="2"/>
<line x1="2681.9" x2="2681.9" y1="1695.4" y2="1690.8" stroke="#c5d6e8" stroke-width="2"/>
<line x1="2685.4" x2="2685.4" y1="1695.4" y2="1683.4" stroke="#c5d6e8" stroke-width="2"/>
<line x1="2761.1" x2="2761.1" y1="1695.4" y2="1688.4" stroke="#c5d6e8" stroke-width="2"/>
<line x1="2783.9" x2="2783.9" y1="1695.4" y2="1690.8" stroke="#c5d6e8" stroke-width="2"/>
<line x1="2797.2" x2="2797.2" y1="1695.4" y2="1690.8" stroke="#c5d6e8" stroke-width="2"/>
<line x1="2806.7" x2="2806.7" y1="1695.4" y2="1690.8" stroke="#c5d6e8" stroke-width="2"/>
<line x1="2814.0" x2="2814.0" y1="1695.4" y2="1690.8" stroke="#c5d6e8" stroke-width="2"/>
<line x1="2820.0" x2="2820.0" y1="1695.4" y2="1690.8" stroke="#c5d6e8" stroke-width="2"/>
<line x1="2825.1" x2="2825.1" y1="1695.4" y2="1690.8" stroke="#c5d6e8" stroke-width="2"/>
<line x1="2829.5" x2="2829.5" y1="1695.4" y2="1690.8" stroke="#c5d6e8" stroke-width="2"/>
<line x1="2833.3" x2="2833.3" y1="1695.4" y2="1690.8" stroke="#c5d6e8" stroke-width="2"/>
<path d="M2536.3 1695.4 L2545.4 1693.0 L2556.7 1689.5 L2564.3 1686.3 L2568.1 1684.5 L2575.6 1682.0 L2580.9 1679.3 L2584.0 1676.9 L2585.9 1675.8 L2587.7 1677.7 L2590.0 1679.3 L2592.1 1679.6 L2594.6 1678.3 L2597.6 1677.7 L2600.8 1675.8 L2602.5 1680.4 L2604.9 1687.4 L2608.2 1690.3 L2612.0 1692.7 L2614.5 1695.4Z" fill="#5b95c8" opacity="0.9"/>
<path d="M2536.3 1695.4 L2545.4 1693.0 L2556.7 1689.5 L2564.3 1686.3 L2568.1 1684.5 L2575.6 1682.0 L2580.9 1679.3 L2584.0 1676.9 L2585.9 1675.8 L2587.7 1677.7 L2590.0 1679.3 L2592.1 1679.6 L2594.6 1678.3 L2597.6 1677.7 L2600.8 1675.8 L2602.5 1680.4 L2604.9 1687.4 L2608.2 1690.3 L2612.0 1692.7 L2614.5 1695.4" fill="none" stroke="#3fd07a" stroke-width="2"/>
<path d="M2541.6 1695.0 L2587.0 1693.5 L2609.7 1695.1" fill="none" stroke="#9a4fd0" stroke-width="1.6"/>
<path d="M2359.9 1695.4 L2361.6 1695.3 L2363.3 1695.2 L2365.0 1695.2 L2366.7 1695.2 L2368.4 1695.1 L2370.1 1695.1 L2371.8 1695.0 L2373.5 1694.9 L2375.2 1694.9 L2376.9 1694.9 L2378.6 1694.8 L2380.3 1694.8 L2382.1 1694.6 L2383.9 1694.5 L2385.7 1694.5 L2387.5 1694.2 L2389.3 1694.0 L2391.0 1694.0 L2392.8 1693.9 L2394.6 1693.8 L2396.4 1693.7 L2398.2 1693.5 L2400.0 1693.5 L2401.7 1693.3 L2403.5 1693.2 L2405.3 1693.1 L2407.1 1692.8 L2408.8 1692.7 L2410.6 1692.4 L2412.3 1692.3 L2414.0 1692.1 L2415.8 1692.0 L2417.5 1691.7 L2419.3 1691.7 L2421.0 1691.7 L2422.8 1691.0 L2424.5 1690.8 L2426.3 1690.8 L2428.0 1690.7 L2429.7 1690.8 L2431.5 1690.7 L2433.2 1690.4 L2434.9 1690.4 L2436.6 1689.7 L2438.3 1689.8 L2440.1 1689.2 L2441.8 1689.4 L2443.5 1688.7 L2445.2 1688.6 L2446.9 1689.1 L2448.8 1688.8 L2450.7 1688.0 L2452.5 1688.2 L2454.4 1687.5 L2456.3 1687.9 L2458.1 1688.0 L2460.0 1687.3 L2461.9 1687.0 L2463.6 1686.8 L2465.3 1686.3 L2467.0 1685.5 L2468.7 1684.2 L2470.4 1683.7 L2472.1 1683.8 L2473.8 1683.1 L2475.5 1682.6 L2477.2 1682.0 L2479.1 1680.3 L2481.0 1680.3 L2482.9 1679.0 L2484.8 1678.4 L2486.7 1677.9 L2488.6 1676.3 L2490.5 1676.3 L2492.4 1674.5 L2494.3 1674.4 L2496.2 1673.0 L2498.1 1672.4 L2500.0 1671.3 L2501.9 1668.7 L2503.8 1667.7 L2505.7 1667.5 L2507.5 1665.0 L2509.4 1665.2 L2511.3 1663.5 L2513.2 1661.0 L2515.1 1660.0 L2517.0 1660.0 L2518.9 1656.2 L2520.8 1656.9 L2522.6 1655.3 L2524.5 1652.4 L2526.4 1652.3 L2528.2 1651.1 L2530.0 1650.4 L2531.8 1649.1 L2533.6 1646.1 L2535.4 1645.9 L2537.5 1642.9 L2539.5 1642.1 L2541.6 1640.1 L2543.6 1638.2 L2546.1 1625.8 L2548.4 1617.8 L2550.4 1605.4 L2552.9 1599.1 L2556.0 1593.7 L2558.6 1589.1 L2561.3 1577.7 L2564.1 1561.8 L2565.4 1537.5 L2566.8 1507.3 L2568.1 1452.7 L2569.6 1433.2 L2571.1 1423.5 L2572.2 1421.4 L2573.4 1428.9 L2575.0 1435.0 L2576.0 1427.8 L2577.1 1435.8 L2578.7 1433.2 L2580.4 1433.6 L2581.7 1395.7 L2583.1 1361.4 L2584.5 1358.6 L2585.5 1331.5 L2586.4 1316.4 L2587.4 1326.1 L2588.5 1352.9 L2589.9 1381.8 L2591.2 1411.7 L2592.1 1435.0 L2593.0 1422.4 L2594.2 1401.0 L2595.4 1387.3 L2596.2 1411.7 L2597.3 1425.4 L2598.3 1406.4 L2599.7 1374.3 L2600.8 1358.7 L2601.8 1379.6 L2603.0 1436.3 L2604.1 1545.4 L2604.9 1588.4 L2605.8 1613.6 L2606.7 1604.4 L2607.6 1572.3 L2608.5 1560.4 L2609.4 1575.0 L2610.4 1600.0 L2611.6 1647.2 L2613.1 1692.7 L2614.5 1695.4" fill="none" stroke="#c8dcef" stroke-width="2.3" stroke-linejoin="round"/>
<path d="M1957.0 1693.9 Q1998.0 1689.4 2048.0 1694.4" fill="none" stroke="#a080c8" stroke-width="1.4" opacity="0.45"/>
<rect x="1977.3" y="1343.3" width="340.5" height="137.5" fill="#00599f" stroke="#c9d9ea" stroke-width="2.2"/>
<line x1="1990" x2="2054.4" y1="1370" y2="1370" stroke="#d4e3f2" stroke-width="2"/>
<rect x="1990" y="1413" width="64.4" height="12" fill="#5b95c8"/>
<line x1="1990" x2="2054.4" y1="1412.6" y2="1412.6" stroke="#3fd07a" stroke-width="2"/>
<line x1="1990" x2="2054.4" y1="1455.8" y2="1455.8" stroke="#7a45b5" stroke-width="2"/>
</svg>
<span class="t" style="left:2067.7px;top:1355.5px;font-size:23px;line-height:23px;transform-origin:0 50%;transform:scaleX(0.9251);color:#d4e3f2;">Incoming Spectrum</span>
<span class="t" style="left:2067.7px;top:1397.8px;font-size:23px;line-height:23px;transform-origin:0 50%;transform:scaleX(0.9300);color:#d4e3f2;">Surface Spectrum</span>
<span class="t" style="left:2067.7px;top:1439.7px;font-size:23px;line-height:23px;transform-origin:0 50%;transform:scaleX(0.9351);color:#d4e3f2;">Backscattered Spectrum</span>
<span class="t" style="left:1927.8px;top:1685.2px;font-size:21.6px;line-height:21.6px;transform-origin:0 50%;transform:scaleX(1.0000);color:#a6c7e7;">0</span>
<span class="t" style="left:1891.7px;top:1631.7px;font-size:21.6px;line-height:21.6px;transform-origin:0 50%;transform:scaleX(1.0000);color:#a6c7e7;">1000</span>
<span class="t" style="left:1891.7px;top:1578.2px;font-size:21.6px;line-height:21.6px;transform-origin:0 50%;transform:scaleX(1.0000);color:#a6c7e7;">2000</span>
<span class="t" style="left:1891.7px;top:1524.6px;font-size:21.6px;line-height:21.6px;transform-origin:0 50%;transform:scaleX(1.0000);color:#a6c7e7;">3000</span>
<span class="t" style="left:1891.7px;top:1471.1px;font-size:21.6px;line-height:21.6px;transform-origin:0 50%;transform:scaleX(1.0000);color:#a6c7e7;">4000</span>
<span class="t" style="left:1891.7px;top:1417.6px;font-size:21.6px;line-height:21.6px;transform-origin:0 50%;transform:scaleX(1.0000);color:#a6c7e7;">5000</span>
<span class="t" style="left:1891.7px;top:1364.1px;font-size:21.6px;line-height:21.6px;transform-origin:0 50%;transform:scaleX(1.0000);color:#a6c7e7;">6000</span>
<span class="t" style="left:1891.7px;top:1310.6px;font-size:21.6px;line-height:21.6px;transform-origin:0 50%;transform:scaleX(1.0000);color:#a6c7e7;">7000</span>
<span class="t" style="left:2071.0px;top:1705.3px;font-size:21.6px;line-height:21.6px;color:#a6c7e7;transform:translateX(-50%);">10</span>
<span class="t" style="left:2092.0px;top:1700.7px;font-size:14px;line-height:14px;color:#a6c7e7;transform:translateX(-50%);">-6</span>
<span class="t" style="left:2231.6px;top:1705.3px;font-size:21.6px;line-height:21.6px;color:#a6c7e7;transform:translateX(-50%);">0,0001</span>
<span class="t" style="left:2382.6px;top:1705.3px;font-size:21.6px;line-height:21.6px;color:#a6c7e7;transform:translateX(-50%);">0,01</span>
<span class="t" style="left:2534.0px;top:1705.3px;font-size:21.6px;line-height:21.6px;color:#a6c7e7;transform:translateX(-50%);">1</span>
<span class="t" style="left:2685.4px;top:1705.3px;font-size:21.6px;line-height:21.6px;color:#a6c7e7;transform:translateX(-50%);">100</span>
<span class="t" style="left:2325.0px;top:1737.8px;font-size:22px;line-height:22px;transform-origin:0 50%;transform:scaleX(0.9784);color:#a6c7e7;">Energy [MeV]</span>
<span class="t" style="left:1862px;top:1505px;font-size:21px;line-height:21px;color:#a6c7e7;transform:translate(-50%,-50%) rotate(-90deg)">n</span>
<div class="a " style="left:1993.0px;top:1774.0px;width:5.0px;height:1.6px;background:#9dbcdb;"></div>
</div>
<div class="a " style="left:1760.8px;top:70.2px;width:76.4px;height:76.4px;background:#fff;border:2.6px solid #000;border-radius:50%;box-sizing:border-box;"></div>
<svg class="a" style="left:0;top:0" width="10" height="10"><path transform="translate(1786.23,126.90) scale(0.02539,-0.02539)" d="M763 0H583V1147Q518 1085 412.500 1023Q307 961 223 930V1104Q374 1175 487 1276Q600 1377 647 1472H763Z" fill="#000"/></svg>
<div class="a " style="left:1517.8px;top:200.5px;width:76.4px;height:76.4px;background:#fff;border:2.6px solid #000;border-radius:50%;box-sizing:border-box;"></div>
<span class="t" style="left:1556.0px;top:211.9px;font-size:52px;line-height:52px;color:#000;transform:translateX(-50%);">2</span>
<div class="a " style="left:1826.4px;top:257.8px;width:76.4px;height:76.4px;background:#fff;border:2.6px solid #000;border-radius:50%;box-sizing:border-box;"></div>
<span class="t" style="left:1864.6px;top:269.2px;font-size:52px;line-height:52px;color:#000;transform:translateX(-50%);">3</span>
<div class="a " style="left:20.2px;top:319.4px;width:76.4px;height:76.4px;background:#fff;border:2.6px solid #000;border-radius:50%;box-sizing:border-box;"></div>
<span class="t" style="left:58.4px;top:330.8px;font-size:52px;line-height:52px;color:#000;transform:translateX(-50%);">4</span>
<div class="a " style="left:731.3px;top:878.1px;width:76.4px;height:76.4px;background:#fff;border:2.6px solid #000;border-radius:50%;box-sizing:border-box;"></div>
<span class="t" style="left:769.5px;top:889.5px;font-size:52px;line-height:52px;color:#000;transform:translateX(-50%);">5</span>
<div class="a " style="left:1078.8px;top:1353.8px;width:76.4px;height:76.4px;background:#fff;border:2.6px solid #000;border-radius:50%;box-sizing:border-box;"></div>
<span class="t" style="left:1117.0px;top:1365.2px;font-size:52px;line-height:52px;color:#000;transform:translateX(-50%);">6</span>
<div class="a " style="left:1847.3px;top:1280.3px;width:76.4px;height:76.4px;background:#fff;border:2.6px solid #000;border-radius:50%;box-sizing:border-box;"></div>
<span class="t" style="left:1885.5px;top:1291.7px;font-size:52px;line-height:52px;color:#000;transform:translateX(-50%);">7</span>
<div class="a " style="left:2724.3px;top:1087.3px;width:76.4px;height:76.4px;background:#fff;border:2.6px solid #000;border-radius:50%;box-sizing:border-box;"></div>
<span class="t" style="left:2762.5px;top:1098.7px;font-size:52px;line-height:52px;color:#000;transform:translateX(-50%);">8</span>
<div class="a " style="left:2908.0px;top:1868.0px;width:2.5px;height:2.5px;background:#b8b8b8;"></div>
<div class="a " style="left:2908.0px;top:1873.0px;width:2.5px;height:2.5px;background:#b8b8b8;"></div>
<div class="a " style="left:2908.0px;top:1878.0px;width:2.5px;height:2.5px;background:#b8b8b8;"></div>
<div class="a " style="left:2903.0px;top:1873.0px;width:2.5px;height:2.5px;background:#b8b8b8;"></div>
<div class="a " style="left:2903.0px;top:1878.0px;width:2.5px;height:2.5px;background:#b8b8b8;"></div>
<div class="a " style="left:2898.0px;top:1878.0px;width:2.5px;height:2.5px;background:#b8b8b8;"></div>
</body></html>
